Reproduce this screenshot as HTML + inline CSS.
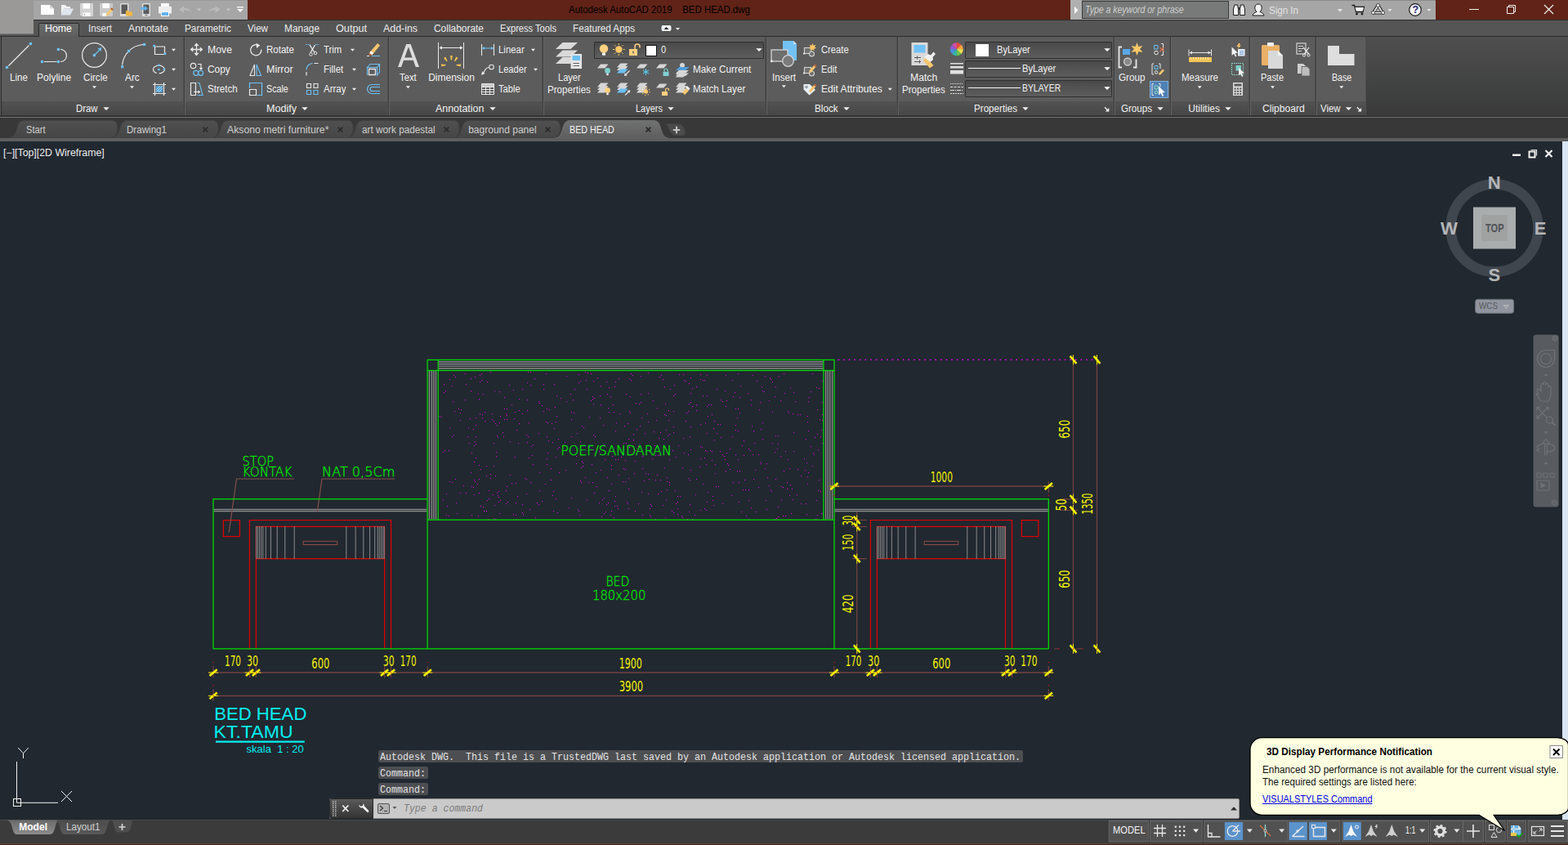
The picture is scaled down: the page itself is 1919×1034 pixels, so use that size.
<!DOCTYPE html>
<html lang="en"><head><meta charset="utf-8"><title>Autodesk AutoCAD 2019 - BED HEAD.dwg</title>
<style>
html,body{margin:0;padding:0;background:#212830;overflow:hidden;}
#app{position:relative;width:1919px;height:1034px;overflow:hidden;background:#212830;font-family:"Liberation Sans",sans-serif;}
.b{position:absolute;box-sizing:border-box;}
.t{position:absolute;white-space:pre;transform-origin:0 50%;}
svg{position:absolute;overflow:visible;}
svg text{white-space:pre;}
</style></head><body><div id="app">
<section id="workspace-background">
<div class="b" style="left:0px;top:45px;width:1919px;height:98px;background:#454545;"></div>
<div class="b" style="left:0px;top:144px;width:1919px;height:25px;background:#383838;"></div>
<div class="b" style="left:0px;top:169px;width:1919px;height:4px;background:#5e5e5e;"></div>
<div class="b" style="left:0px;top:173px;width:1912px;height:830px;background:#212830;"></div>
<div class="b" style="left:1912px;top:173px;width:7px;height:830px;background:#d9e6f2;"></div>
</section>
<section id="title-bar-and-ribbon-tabs">
<div class="b" style="left:0px;top:0px;width:1919px;height:24px;background:#612317;"></div>
<div class="b" style="left:0px;top:24px;width:1919px;height:1px;background:#2e2e2e;"></div>
<div class="b" style="left:0px;top:25px;width:1919px;height:19px;background:#555555;"></div>
<div class="b" style="left:0px;top:44px;width:1919px;height:1px;background:#2b2b2b;"></div>
<div class="b" style="left:0px;top:0px;width:41px;height:41px;background:#9b9997;"></div>
<div class="b" style="left:0px;top:41px;width:41px;height:1px;background:#7a7a7a;"></div>
<div class="b" style="left:41px;top:0px;width:262px;height:24px;background:#a6a6a6;border-top:1px solid #9a9a9a;"></div>
<div class="b" style="left:1310px;top:0px;width:447px;height:24px;background:#a6a6a6;border-top:1px solid #8a8a8a;"></div>
<div class="b" style="left:1310px;top:0px;width:14px;height:24px;background:#b0b0b0;"></div>
<div class="b" style="left:1324px;top:1px;width:180px;height:22px;background:#787a79;border:1px solid #3a3a3a;"></div>
<span class="t " style="left:1327.80px;top:5px;font-size:12px;line-height:14px;color:#cfcfcf;font-family:'Liberation Sans',sans-serif;font-style:italic;transform:scaleX(0.8749);">Type a keyword or phrase</span>
<span class="t " style="left:1553.00px;top:6px;font-size:12px;line-height:14px;color:#e2e2e2;font-family:'Liberation Sans',sans-serif;transform:scaleX(0.9636);">Sign In</span>
<span class="t " style="left:695.60px;top:5px;font-size:12px;line-height:14px;color:#000000;font-family:'Liberation Sans',sans-serif;transform:scaleX(0.9528);">Autodesk AutoCAD 2019    BED HEAD.dwg</span>
<svg width="1919" height="45" viewBox="0 0 1919 45" style="left:0;top:0"><path d="M50 6h11l5 4.5V18H50z" fill="#ffffff"/><path d="M61 6v4.5h5z" fill="#d8d8d8"/><path d="M75 6h5l1.5 2H86v2.5H78.5L75 18z" fill="#f4f4f4"/><path d="M78.5 10.5H90L86 18.5H74.5z" fill="#dfe6ee"/><path d="M98 4h16v16h-14.5L98 18.500z" fill="#d2d2d2"/><rect x="101.5" y="4" width="8.500" height="6.500" fill="#ffffff"/><rect x="101.500" y="15.500" width="9" height="4.500" fill="#ffffff"/><rect x="103" y="16.500" width="1" height="2.500" fill="#b0b0b0"/><path d="M122 4h16v16h-14.5L122 18.500z" fill="#c9c9c9"/><rect x="125.500" y="4" width="8.500" height="6" fill="#ffffff"/><rect x="125.5" y="16" width="5" height="4" fill="#ffffff"/><path d="M130 17l6-7 2.500 2-6 7-3 .8z" fill="#f1c877"/><path d="M135 11l1.500-1.700 2.500 2-1.500 1.800z" fill="#b5663d"/><rect x="147" y="4" width="10.500" height="16" rx="1" fill="#dcdcdc"/><rect x="148.500" y="5.500" width="7.500" height="11.500" fill="#5a5a5a"/><path d="M154 13h3l1 1.200h4V19.500h-8z" fill="#f0b545"/><rect x="174" y="4" width="10" height="16" rx="1" fill="#dcdcdc"/><rect x="175.500" y="5.500" width="7" height="11.500" fill="#5a5a5a"/><path d="M172 9h5V7l4 3.300-4 3.200V11.500h-5z" fill="#5fb4f0"/><rect x="177.500" y="18" width="3" height="1" fill="#666"/><rect x="197" y="4" width="10" height="5" fill="#ffffff"/><rect x="194" y="8" width="16" height="8.500" fill="#eeeeee"/><rect x="197" y="14" width="10" height="6" fill="#ffffff"/><rect x="198" y="15" width="8" height="4" fill="#62b3ee"/><path d="M219 11.500l6-4.300v2.600c4 0 7.500 1.500 9 5-2-2-5-2.600-9-2.400v3.300z" fill="#b9b9b9"/><path d="M241 10.500h5l-2.500 3z" fill="#c4c8cc"/><path d="M269.500 11.500l-6-4.300v2.600c-4 0-7.500 1.500-9 5 2-2 5-2.600 9-2.400v3.300z" fill="#b9b9b9"/><path d="M277 10.500h5l-2.500 3z" fill="#c4c8cc"/><rect x="290" y="8" width="8" height="1.500" fill="#f4f4f4"/><path d="M290 11h8l-4 4z" fill="#f4f4f4"/><path d="M1315 8l4.500 4.500-4.500 4.500z" fill="#ffffff"/><g fill="#f0f0f0" stroke="#1a1a1a" stroke-width="1"><path d="M1509.5 11l1.500-5h3.500l1 5v7.500h-6z"/><path d="M1517.500 11l1-5h3.500l1.500 5v7.500h-6z"/></g><rect x="1510" y="13.500" width="5" height="4.500" fill="#ffffff"/><rect x="1518" y="13.500" width="5" height="4.500" fill="#ffffff"/><rect x="1515" y="9" width="3" height="3" fill="#333"/><path d="M1533 19c.5-3 3-3.500 5-4.500-2-2-2.500-4-2-6.500.5-2 2-3 4-3s3.500 1 4 3c.5 2.500 0 4.500-2 6.500 2 1 4.500 1.500 5 4.500z" fill="#f2f2f2" stroke="#1a1a1a" stroke-width="1"/><path d="M1637 11h6l-3 3.500z" fill="#e8e8e8"/><path d="M1654.5 6.500h3l2 8h8.500l1.500-6h-11" fill="none" stroke="#1a1a1a" stroke-width="1.300"/><circle cx="1660.500" cy="17" r="1.400" fill="#1a1a1a"/><circle cx="1667" cy="17" r="1.400" fill="#1a1a1a"/><path d="M1658.500 9h10.500l-1.200 4.500h-8z" fill="#f2f2f2"/><path d="M1686.500 5.500c1 0 1.500.5 2 1.500l4.500 7.500c1 1.800-.5 2.500-2 2.500h-9c-1.500 0-3-.7-2-2.500l4.500-7.500c.5-1 1-1.500 2-1.500z" fill="#efefef" stroke="#1a1a1a" stroke-width="1.100"/><path d="M1686.500 9l3.500 5.500h-7z" fill="#a6a6a6" stroke="#1a1a1a" stroke-width=".8"/><circle cx="1686.500" cy="6.500" r="2" fill="#f4f4f4" stroke="#1a1a1a" stroke-width=".800"/><circle cx="1680.500" cy="15.500" r="2" fill="#f4f4f4" stroke="#1a1a1a" stroke-width=".800"/><circle cx="1692.500" cy="15.500" r="2" fill="#f4f4f4" stroke="#1a1a1a" stroke-width=".800"/><path d="M1698.500 11h5l-2.500 3z" fill="#e8e8e8"/><circle cx="1732" cy="12" r="7.300" fill="#f4f4f4" stroke="#1a1a1a" stroke-width="1.200"/><path d="M1746.500 11h5l-2.500 3z" fill="#e8e8e8"/><rect x="1798" y="11" width="12" height="1" fill="#f0f0f0"/><path d="M1844.500 8.500h8v8h-8zM1846.500 8.500v-2h8v8h-2" fill="none" stroke="#f0f0f0" stroke-width="1"/><path d="M1890 6l11 11M1901 6l-11 11" fill="none" stroke="#f0f0f0" stroke-width="1.200"/><rect x="809" y="30.500" width="13" height="8" rx="2.500" fill="#eef2f6" stroke="#3a3a3a" stroke-width=".8"/><path d="M812.500 36l3-3 3 3z" fill="#2a2a2a"/><path d="M827 34h5l-2.500 3z" fill="#e8e8e8"/></svg>
<span class="t " style="left:1728.40px;top:5px;font-size:12.5px;line-height:14px;color:#25257a;font-family:'Liberation Sans',sans-serif;font-weight:bold;">?</span>
<div class="b" style="left:46.5px;top:27.5px;width:50.5px;height:17.5px;background:linear-gradient(#6a6c6b,#5e5e5e);border:1px solid #2b2b2b;border-bottom:none;border-radius:2px 2px 0 0;"></div>
<span class="t " style="left:55.00px;top:28px;font-size:12px;line-height:14px;color:#ffffff;font-family:'Liberation Sans',sans-serif;transform:scaleX(1.0307);">Home</span>
<span class="t " style="left:108.00px;top:28px;font-size:12px;line-height:14px;color:#ececec;font-family:'Liberation Sans',sans-serif;transform:scaleX(0.9662);">Insert</span>
<span class="t " style="left:157.00px;top:28px;font-size:12px;line-height:14px;color:#ececec;font-family:'Liberation Sans',sans-serif;transform:scaleX(1.0198);">Annotate</span>
<span class="t " style="left:226.00px;top:28px;font-size:12px;line-height:14px;color:#ececec;font-family:'Liberation Sans',sans-serif;transform:scaleX(0.9825);">Parametric</span>
<span class="t " style="left:303.00px;top:28px;font-size:12px;line-height:14px;color:#ececec;font-family:'Liberation Sans',sans-serif;transform:scaleX(0.9691);">View</span>
<span class="t " style="left:348.00px;top:28px;font-size:12px;line-height:14px;color:#ececec;font-family:'Liberation Sans',sans-serif;transform:scaleX(0.9914);">Manage</span>
<span class="t " style="left:411.00px;top:28px;font-size:12px;line-height:14px;color:#ececec;font-family:'Liberation Sans',sans-serif;transform:scaleX(1.0546);">Output</span>
<span class="t " style="left:469.00px;top:28px;font-size:12px;line-height:14px;color:#ececec;font-family:'Liberation Sans',sans-serif;transform:scaleX(1.0323);">Add-ins</span>
<span class="t " style="left:531.00px;top:28px;font-size:12px;line-height:14px;color:#ececec;font-family:'Liberation Sans',sans-serif;transform:scaleX(0.9939);">Collaborate</span>
<span class="t " style="left:612.00px;top:28px;font-size:12px;line-height:14px;color:#ececec;font-family:'Liberation Sans',sans-serif;transform:scaleX(0.9264);">Express Tools</span>
<span class="t " style="left:701.00px;top:28px;font-size:12px;line-height:14px;color:#ececec;font-family:'Liberation Sans',sans-serif;transform:scaleX(0.9736);">Featured Apps</span>
</section>
<section id="ribbon-panels">
<div class="b" style="left:0px;top:45px;width:1919px;height:98px;background:linear-gradient(#4e4e4e 0px,#484848 30px,#414242 60px,#3a3a3a 97px);"></div>
<div class="b" style="left:0px;top:45px;width:1px;height:98px;background:#5a5a5a;"></div>
<div class="b" style="left:1px;top:45px;width:1px;height:98px;background:#2a2a2a;"></div>
<div class="b" style="left:2px;top:45px;width:1669px;height:79px;background:#5c5c5c;"></div>
<div class="b" style="left:2px;top:124px;width:1669px;height:17px;background:linear-gradient(#525252,#474747);"></div>
<div class="b" style="left:0px;top:141px;width:1671px;height:1px;background:#383838;"></div>
<div class="b" style="left:0px;top:142px;width:1919px;height:1px;background:#2a2a2a;"></div>
<div class="b" style="left:0px;top:143px;width:1919px;height:1px;background:#767676;"></div>
<div class="b" style="left:224.5px;top:45px;width:1px;height:96px;background:#3d3d3d;"></div>
<div class="b" style="left:225.5px;top:45px;width:1px;height:96px;background:#646464;"></div>
<div class="b" style="left:223.5px;top:45px;width:1px;height:96px;background:#505050;"></div>
<div class="b" style="left:474.5px;top:45px;width:1px;height:96px;background:#3d3d3d;"></div>
<div class="b" style="left:475.5px;top:45px;width:1px;height:96px;background:#646464;"></div>
<div class="b" style="left:473.5px;top:45px;width:1px;height:96px;background:#505050;"></div>
<div class="b" style="left:664px;top:45px;width:1px;height:96px;background:#3d3d3d;"></div>
<div class="b" style="left:665px;top:45px;width:1px;height:96px;background:#646464;"></div>
<div class="b" style="left:663px;top:45px;width:1px;height:96px;background:#505050;"></div>
<div class="b" style="left:937px;top:45px;width:1px;height:96px;background:#3d3d3d;"></div>
<div class="b" style="left:938px;top:45px;width:1px;height:96px;background:#646464;"></div>
<div class="b" style="left:936px;top:45px;width:1px;height:96px;background:#505050;"></div>
<div class="b" style="left:1098px;top:45px;width:1px;height:96px;background:#3d3d3d;"></div>
<div class="b" style="left:1099px;top:45px;width:1px;height:96px;background:#646464;"></div>
<div class="b" style="left:1097px;top:45px;width:1px;height:96px;background:#505050;"></div>
<div class="b" style="left:1362.5px;top:45px;width:1px;height:96px;background:#3d3d3d;"></div>
<div class="b" style="left:1363.5px;top:45px;width:1px;height:96px;background:#646464;"></div>
<div class="b" style="left:1361.5px;top:45px;width:1px;height:96px;background:#505050;"></div>
<div class="b" style="left:1432px;top:45px;width:1px;height:96px;background:#3d3d3d;"></div>
<div class="b" style="left:1433px;top:45px;width:1px;height:96px;background:#646464;"></div>
<div class="b" style="left:1431px;top:45px;width:1px;height:96px;background:#505050;"></div>
<div class="b" style="left:1529px;top:45px;width:1px;height:96px;background:#3d3d3d;"></div>
<div class="b" style="left:1530px;top:45px;width:1px;height:96px;background:#646464;"></div>
<div class="b" style="left:1528px;top:45px;width:1px;height:96px;background:#505050;"></div>
<div class="b" style="left:1609.5px;top:45px;width:1px;height:96px;background:#3d3d3d;"></div>
<div class="b" style="left:1610.5px;top:45px;width:1px;height:96px;background:#646464;"></div>
<div class="b" style="left:1608.5px;top:45px;width:1px;height:96px;background:#505050;"></div>
<div class="b" style="left:1670.5px;top:45px;width:1px;height:96px;background:#505050;"></div>
<div class="b" style="left:727px;top:50.5px;width:208px;height:21px;background:linear-gradient(#4a4a4a,#5d5d5d);border:1px solid #2f2f2f;border-radius:1px;"></div>
<div class="b" style="left:1181px;top:50.5px;width:180px;height:21px;background:linear-gradient(#4a4a4a,#5d5d5d);border:1px solid #2f2f2f;border-radius:1px;"></div>
<div class="b" style="left:1181px;top:73.5px;width:180px;height:21px;background:linear-gradient(#4a4a4a,#5d5d5d);border:1px solid #2f2f2f;border-radius:1px;"></div>
<div class="b" style="left:1181px;top:97.5px;width:180px;height:21px;background:linear-gradient(#4a4a4a,#5d5d5d);border:1px solid #2f2f2f;border-radius:1px;"></div>
<div class="b" style="left:790px;top:55px;width:14px;height:14px;background:#ffffff;border:1px solid #111;"></div>
<div class="b" style="left:1193.5px;top:53.5px;width:16px;height:15px;background:#ffffff;"></div>
<div class="b" style="left:1185px;top:83px;width:64px;height:1px;background:#f4f4f4;"></div>
<div class="b" style="left:1185px;top:107px;width:64px;height:1px;background:#f4f4f4;"></div>
<div class="b" style="left:1406.5px;top:99px;width:23px;height:21px;background:#4f7fb3;border:1px solid #7fb0e0;"></div>
<span class="t " style="left:12.40px;top:88px;font-size:12px;line-height:14px;color:#f2f2f2;font-family:'Liberation Sans',sans-serif;transform:scaleX(0.9609);">Line</span>
<span class="t " style="left:45.00px;top:88px;font-size:12px;line-height:14px;color:#f2f2f2;font-family:'Liberation Sans',sans-serif;transform:scaleX(1.0040);">Polyline</span>
<span class="t " style="left:101.50px;top:88px;font-size:12px;line-height:14px;color:#f2f2f2;font-family:'Liberation Sans',sans-serif;transform:scaleX(0.9683);">Circle</span>
<span class="t " style="left:153.00px;top:88px;font-size:12px;line-height:14px;color:#f2f2f2;font-family:'Liberation Sans',sans-serif;transform:scaleX(0.9889);">Arc</span>
<span class="t " style="left:489.40px;top:88px;font-size:12px;line-height:14px;color:#f2f2f2;font-family:'Liberation Sans',sans-serif;transform:scaleX(0.9402);">Text</span>
<span class="t " style="left:524.20px;top:88px;font-size:12px;line-height:14px;color:#f2f2f2;font-family:'Liberation Sans',sans-serif;">Dimension</span>
<span class="t " style="left:683.20px;top:88px;font-size:12px;line-height:14px;color:#f2f2f2;font-family:'Liberation Sans',sans-serif;transform:scaleX(0.9224);">Layer</span>
<span class="t " style="left:670.40px;top:103px;font-size:12px;line-height:14px;color:#f2f2f2;font-family:'Liberation Sans',sans-serif;transform:scaleX(0.9670);">Properties</span>
<span class="t " style="left:945.00px;top:88px;font-size:12px;line-height:14px;color:#f2f2f2;font-family:'Liberation Sans',sans-serif;transform:scaleX(0.9662);">Insert</span>
<span class="t " style="left:1114.30px;top:88px;font-size:12px;line-height:14px;color:#f2f2f2;font-family:'Liberation Sans',sans-serif;transform:scaleX(1.0157);">Match</span>
<span class="t " style="left:1104.30px;top:103px;font-size:12px;line-height:14px;color:#f2f2f2;font-family:'Liberation Sans',sans-serif;transform:scaleX(0.9634);">Properties</span>
<span class="t " style="left:1369.30px;top:88px;font-size:12px;line-height:14px;color:#f2f2f2;font-family:'Liberation Sans',sans-serif;transform:scaleX(0.9742);">Group</span>
<span class="t " style="left:1446.30px;top:88px;font-size:12px;line-height:14px;color:#f2f2f2;font-family:'Liberation Sans',sans-serif;transform:scaleX(0.9617);">Measure</span>
<span class="t " style="left:1543.30px;top:88px;font-size:12px;line-height:14px;color:#f2f2f2;font-family:'Liberation Sans',sans-serif;transform:scaleX(0.9124);">Paste</span>
<span class="t " style="left:1629.50px;top:88px;font-size:12px;line-height:14px;color:#f2f2f2;font-family:'Liberation Sans',sans-serif;transform:scaleX(0.8882);">Base</span>
<span class="t " style="left:254.20px;top:54px;font-size:12px;line-height:14px;color:#f2f2f2;font-family:'Liberation Sans',sans-serif;transform:scaleX(1.0224);">Move</span>
<span class="t " style="left:254.20px;top:78px;font-size:12px;line-height:14px;color:#f2f2f2;font-family:'Liberation Sans',sans-serif;transform:scaleX(0.9923);">Copy</span>
<span class="t " style="left:254.20px;top:102px;font-size:12px;line-height:14px;color:#f2f2f2;font-family:'Liberation Sans',sans-serif;transform:scaleX(0.9654);">Stretch</span>
<span class="t " style="left:326.40px;top:54px;font-size:12px;line-height:14px;color:#f2f2f2;font-family:'Liberation Sans',sans-serif;transform:scaleX(0.9616);">Rotate</span>
<span class="t " style="left:326.40px;top:78px;font-size:12px;line-height:14px;color:#f2f2f2;font-family:'Liberation Sans',sans-serif;transform:scaleX(1.0406);">Mirror</span>
<span class="t " style="left:326.40px;top:102px;font-size:12px;line-height:14px;color:#f2f2f2;font-family:'Liberation Sans',sans-serif;transform:scaleX(0.8924);">Scale</span>
<span class="t " style="left:395.60px;top:54px;font-size:12px;line-height:14px;color:#f2f2f2;font-family:'Liberation Sans',sans-serif;transform:scaleX(0.9428);">Trim</span>
<span class="t " style="left:395.60px;top:78px;font-size:12px;line-height:14px;color:#f2f2f2;font-family:'Liberation Sans',sans-serif;transform:scaleX(0.9549);">Fillet</span>
<span class="t " style="left:395.60px;top:102px;font-size:12px;line-height:14px;color:#f2f2f2;font-family:'Liberation Sans',sans-serif;transform:scaleX(0.9556);">Array</span>
<span class="t " style="left:610.40px;top:54px;font-size:12px;line-height:14px;color:#f2f2f2;font-family:'Liberation Sans',sans-serif;transform:scaleX(0.9503);">Linear</span>
<span class="t " style="left:610.40px;top:78px;font-size:12px;line-height:14px;color:#f2f2f2;font-family:'Liberation Sans',sans-serif;transform:scaleX(0.9258);">Leader</span>
<span class="t " style="left:610.40px;top:102px;font-size:12px;line-height:14px;color:#f2f2f2;font-family:'Liberation Sans',sans-serif;transform:scaleX(0.9342);">Table</span>
<span class="t " style="left:808.90px;top:54px;font-size:12px;line-height:14px;color:#f2f2f2;font-family:'Liberation Sans',sans-serif;transform:scaleX(0.9271);">0</span>
<span class="t " style="left:848.20px;top:78px;font-size:12px;line-height:14px;color:#f2f2f2;font-family:'Liberation Sans',sans-serif;transform:scaleX(0.9807);">Make Current</span>
<span class="t " style="left:848.20px;top:102px;font-size:12px;line-height:14px;color:#f2f2f2;font-family:'Liberation Sans',sans-serif;transform:scaleX(0.9738);">Match Layer</span>
<span class="t " style="left:1004.50px;top:54px;font-size:12px;line-height:14px;color:#f2f2f2;font-family:'Liberation Sans',sans-serif;transform:scaleX(0.9353);">Create</span>
<span class="t " style="left:1004.50px;top:78px;font-size:12px;line-height:14px;color:#f2f2f2;font-family:'Liberation Sans',sans-serif;transform:scaleX(0.9329);">Edit</span>
<span class="t " style="left:1004.50px;top:102px;font-size:12px;line-height:14px;color:#f2f2f2;font-family:'Liberation Sans',sans-serif;transform:scaleX(1.0088);">Edit Attributes</span>
<span class="t " style="left:1220.00px;top:54px;font-size:12px;line-height:14px;color:#f2f2f2;font-family:'Liberation Sans',sans-serif;transform:scaleX(0.9266);">ByLayer</span>
<span class="t " style="left:1250.80px;top:77px;font-size:12px;line-height:14px;color:#f2f2f2;font-family:'Liberation Sans',sans-serif;transform:scaleX(0.9357);">ByLayer</span>
<span class="t " style="left:1250.80px;top:101px;font-size:12px;line-height:14px;color:#f2f2f2;font-family:'Liberation Sans',sans-serif;transform:scaleX(0.8666);">BYLAYER</span>
<span class="t " style="left:93.40px;top:126px;font-size:12px;line-height:14px;color:#f2f2f2;font-family:'Liberation Sans',sans-serif;transform:scaleX(0.9459);">Draw</span>
<span class="t " style="left:325.50px;top:126px;font-size:12px;line-height:14px;color:#f2f2f2;font-family:'Liberation Sans',sans-serif;transform:scaleX(1.0497);">Modify</span>
<span class="t " style="left:533.40px;top:126px;font-size:12px;line-height:14px;color:#f2f2f2;font-family:'Liberation Sans',sans-serif;transform:scaleX(1.0350);">Annotation</span>
<span class="t " style="left:778.20px;top:126px;font-size:12px;line-height:14px;color:#f2f2f2;font-family:'Liberation Sans',sans-serif;transform:scaleX(0.9159);">Layers</span>
<span class="t " style="left:997.30px;top:126px;font-size:12px;line-height:14px;color:#f2f2f2;font-family:'Liberation Sans',sans-serif;transform:scaleX(0.9781);">Block</span>
<span class="t " style="left:1192.00px;top:126px;font-size:12px;line-height:14px;color:#f2f2f2;font-family:'Liberation Sans',sans-serif;transform:scaleX(0.9689);">Properties</span>
<span class="t " style="left:1372.00px;top:126px;font-size:12px;line-height:14px;color:#f2f2f2;font-family:'Liberation Sans',sans-serif;transform:scaleX(0.9655);">Groups</span>
<span class="t " style="left:1454.30px;top:126px;font-size:12px;line-height:14px;color:#f2f2f2;font-family:'Liberation Sans',sans-serif;">Utilities</span>
<span class="t " style="left:1544.50px;top:126px;font-size:12px;line-height:14px;color:#f2f2f2;font-family:'Liberation Sans',sans-serif;transform:scaleX(1.0083);">Clipboard</span>
<span class="t " style="left:1615.50px;top:126px;font-size:12px;line-height:14px;color:#f2f2f2;font-family:'Liberation Sans',sans-serif;transform:scaleX(0.9497);">View</span>
<svg width="1919" height="145" viewBox="0 0 1919 145" style="left:0;top:0"><path d="M126.3 131.2h7.4l-3.7 3.8z" fill="#f0f0f0"/><path d="M369.3 131.2h7.4l-3.7 3.8z" fill="#f0f0f0"/><path d="M599.3 131.2h7.4l-3.7 3.8z" fill="#f0f0f0"/><path d="M817.3 131.2h7.4l-3.7 3.8z" fill="#f0f0f0"/><path d="M1032.3 131.2h7.4l-3.7 3.8z" fill="#f0f0f0"/><path d="M1251.3 131.2h7.4l-3.7 3.8z" fill="#f0f0f0"/><path d="M1416.3 131.2h7.4l-3.7 3.8z" fill="#f0f0f0"/><path d="M1499.3 131.2h7.4l-3.7 3.8z" fill="#f0f0f0"/><path d="M1646.8 131.2h7.4l-3.7 3.8z" fill="#f0f0f0"/><path d="M113.0 105.2h5.0l-2.5 3.0z" fill="#f0f0f0"/><path d="M159.0 105.2h5.0l-2.5 3.0z" fill="#f0f0f0"/><path d="M496.9 105.2h5.0l-2.5 3.0z" fill="#f0f0f0"/><path d="M956.9 104.2h5.0l-2.5 3.0z" fill="#f0f0f0"/><path d="M1465.7 105.2h5.0l-2.5 3.0z" fill="#f0f0f0"/><path d="M1555.0 105.2h5.0l-2.5 3.0z" fill="#f0f0f0"/><path d="M1639.3 105.2h5.0l-2.5 3.0z" fill="#f0f0f0"/><path d="M210.0 59.8h5.0l-2.5 3.0z" fill="#f0f0f0"/><path d="M210.0 83.8h5.0l-2.5 3.0z" fill="#f0f0f0"/><path d="M210.0 107.8h5.0l-2.5 3.0z" fill="#f0f0f0"/><path d="M429.0 59.8h5.0l-2.5 3.0z" fill="#f0f0f0"/><path d="M431.0 83.8h5.0l-2.5 3.0z" fill="#f0f0f0"/><path d="M431.0 107.8h5.0l-2.5 3.0z" fill="#f0f0f0"/><path d="M650.0 59.8h5.0l-2.5 3.0z" fill="#f0f0f0"/><path d="M653.0 83.8h5.0l-2.5 3.0z" fill="#f0f0f0"/><path d="M1086.8 107.8h5.0l-2.5 3.0z" fill="#f0f0f0"/><path d="M925.3 59.2h7.4l-3.7 3.8z" fill="#ffffff"/><path d="M1351.3 59.2h7.4l-3.7 3.8z" fill="#ffffff"/><path d="M1351.3 82.2h7.4l-3.7 3.8z" fill="#ffffff"/><path d="M1351.3 106.2h7.4l-3.7 3.8z" fill="#ffffff"/><path d="M1352.0 131.300l4.500 4.500" fill="none" stroke="#f4f4f4" stroke-width="1.300"/><path d="M1357.3 132v4.500h-4.500z" fill="#f4f4f4"/><path d="M1660.8 131.300l4.500 4.500" fill="none" stroke="#f4f4f4" stroke-width="1.300"/><path d="M1666.1 132v4.500h-4.500z" fill="#f4f4f4"/><path d="M10.5 80.500L35.500 55.500" fill="none" stroke="#e9e9e9" stroke-width="1.2" /><rect x="6.9" y="80.8" width="3.2" height="3.2" fill="#6cc0f4"/><rect x="35.9" y="51.9" width="3.2" height="3.2" fill="#6cc0f4"/><path d="M54 75.500h15.500M74 60.500a7.500 7.500 0 0 1 0 15" fill="none" stroke="#e9e9e9" stroke-width="1.2" /><rect x="49.9" y="73.9" width="3.2" height="3.2" fill="#6cc0f4"/><rect x="69.8" y="73.9" width="3.2" height="3.2" fill="#6cc0f4"/><rect x="69.8" y="58.9" width="3.2" height="3.2" fill="#6cc0f4"/><circle cx="115.5" cy="67.5" r="14.9" fill="none" stroke="#e9e9e9" stroke-width="1.2"/><path d="M116 67l5.500-5.500" fill="none" stroke="#6cc0f4" stroke-width="1.2" /><path d="M124.500 58l-1.200 5-3.800-3.800z" fill="#6cc0f4"/><rect x="113.8" y="65.9" width="3.2" height="3.2" fill="#6cc0f4"/><path d="M149.600 79.500C151 67 160 56 175 54.500" fill="none" stroke="#e9e9e9" stroke-width="1.2" /><rect x="148.1" y="80.1" width="3.2" height="3.2" fill="#6cc0f4"/><rect x="156.0" y="60.9" width="3.2" height="3.2" fill="#6cc0f4"/><rect x="175.0" y="52.8" width="3.2" height="3.2" fill="#6cc0f4"/><path d="M189.500 57h12v9.500h-12z" fill="none" stroke="#e9e9e9" stroke-width="1.2" /><rect x="187.3" y="54.8" width="2.6" height="2.6" fill="#6cc0f4"/><rect x="200.7" y="64.5" width="2.6" height="2.6" fill="#6cc0f4"/><ellipse cx="194.500" cy="85" rx="7" ry="4.800" fill="none" stroke="#e9e9e9" stroke-width="1.200" stroke-dasharray="9 3 20 0"/><rect x="193.2" y="78.6" width="2.4" height="2.4" fill="#6cc0f4"/><rect x="193.2" y="83.8" width="2.4" height="2.4" fill="#6cc0f4"/><rect x="199.8" y="83.8" width="2.4" height="2.4" fill="#6cc0f4"/><path d="M187 103.500h16M187 114.500h16M189.500 101v16M200.500 101v16" fill="none" stroke="#e9e9e9" stroke-width="1.2" /><rect x="191" y="105" width="8" height="8" fill="#4f9fd8" /><path d="M191 110l5-5M191 113l8-8M194 113l5-5" fill="none" stroke="#bfe3fb" stroke-width="0.9" /><path d="M233.500 60.500h14M240.500 53.500v14" fill="none" stroke="#e9e9e9" stroke-width="1.3" /><path d="M240.500 52.600l3.200 3.700h-6.400zM240.500 68.400l3.200-3.700h-6.400zM232.600 60.500l3.700-3.200v6.400zM248.400 60.500l-3.700-3.200v6.400z" fill="#e9e9e9"/><circle cx="236.5" cy="80.5" r="3.2" fill="none" stroke="#e9e9e9" stroke-width="1.2"/><path d="M242 78.500h4v5" fill="none" stroke="#e9e9e9" stroke-width="1.2" /><path d="M243.800 83h4.400l-2.200 3z" fill="#e9e9e9"/><circle cx="239.8" cy="89.3" r="3" fill="none" stroke="#6cc0f4" stroke-width="1.2"/><circle cx="245.6" cy="89.3" r="3" fill="none" stroke="#6cc0f4" stroke-width="1.2"/><path d="M233.500 101.500h6v15h-6z" fill="none" stroke="#e9e9e9" stroke-width="1.2" /><path d="M241.500 101.500h2.500l4 15h-6.500" fill="none" stroke="#6cc0f4" stroke-width="1.1" /><path d="M237 112.500h6" fill="none" stroke="#e9e9e9" stroke-width="1.1" /><path d="M242.500 110.300l2.800 2.200-2.800 2.200z" fill="#e9e9e9"/><path d="M316.500 55.500a6.600 6.600 0 1 0 3.300 5" fill="none" stroke="#e9e9e9" stroke-width="1.3" /><path d="M313.500 52.800l4.800 2.800-4.200 3.400z" fill="#e9e9e9"/><path d="M311.500 79v13.500h-5.500z" fill="none" stroke="#e9e9e9" stroke-width="1.1" /><path d="M314 79v13.500h5.500z" fill="none" stroke="#6cc0f4" stroke-width="1.1" /><path d="M305.500 108v-6.500h15v15h-6" fill="none" stroke="#6cc0f4" stroke-width="1.2" /><path d="M305.500 109.500h8v7h-8z" fill="none" stroke="#e9e9e9" stroke-width="1.2" /><path d="M374 54.500h6M386 54.500h4" fill="none" stroke="#6cc0f4" stroke-width="1" stroke-dasharray="1.500 1"/><path d="M379 55l6 9.500M385.500 55l-5.500 9.500" fill="none" stroke="#e9e9e9" stroke-width="1.4" /><circle cx="380.5" cy="66.5" r="1.8" fill="none" stroke="#e9e9e9" stroke-width="1"/><circle cx="386" cy="65" r="1.8" fill="none" stroke="#e9e9e9" stroke-width="1"/><path d="M375 85.500a8 8 0 0 1 7.500-8" fill="none" stroke="#6cc0f4" stroke-width="1.2" /><path d="M384.500 77.500h5M375 88v4.500" fill="none" stroke="#e9e9e9" stroke-width="1.2" /><path d="M375.500 102.500h5v5h-5zM384 102.500h5v5h-5z" fill="none" stroke="#e9e9e9" stroke-width="1.1" /><path d="M375.500 110.500h5v5h-5zM384 110.500h5v5h-5z" fill="none" stroke="#6cc0f4" stroke-width="1.1" /><path d="M453 63.500l9-10.500 3 2.500-8.500 10.500z" fill="#f6c56e"/><path d="M452 64.700l1.800-2.200 3.200 2.700-1.800 2.200z" fill="#ffffff"/><path d="M450.500 66.500l1.500-1.800 3 2.600-1.200 1.200z" fill="#b5663d"/><path d="M449 68.500h3" fill="none" stroke="#e9e9e9" stroke-width="1" /><path d="M455 68.500h10" fill="none" stroke="#6cc0f4" stroke-width="1" /><path d="M449.500 82.500l3.500-4h11.500l-3 4zM464.500 78.500v9.500l-3 4v-9.500" fill="none" stroke="#6cc0f4" stroke-width="1.1" /><path d="M451.500 84.500h8v7h-8z" fill="none" stroke="#e9e9e9" stroke-width="1.3" /><path d="M449.500 82.500v9.500" fill="none" stroke="#6cc0f4" stroke-width="1.1" /><path d="M465 103.500h-10a5.500 5.500 0 0 0 0 11h10" fill="none" stroke="#6cc0f4" stroke-width="1.2" /><path d="M465 106.500h-9.500a2.500 2.500 0 0 0 0 5h9.500" fill="none" stroke="#6cc0f4" stroke-width="1.2" /><path d="M487 82l10.200-28h5.400l10.400 28h-4.300l-2.900-8.200h-11.800l-2.900 8.200zM495.200 70.500h9.400l-4.700-13.200z" fill="#dcdcdc"/><path d="M536.500 52v32M567.500 52v32" fill="none" stroke="#e9e9e9" stroke-width="1" /><path d="M538 58.500h28" fill="none" stroke="#e9e9e9" stroke-width="1" /><path d="M537.500 58.500l3.500-2.200v4.400zM566.500 58.500l-3.500-2.200v4.400z" fill="#e9e9e9"/><path d="M551 68l.8 5.500h1.200l.8-5.500zM543 71l3.600 4.200 1-.8-2.400-4.800zM560.500 71l-3.600 4.200-1-.8 2.400-4.800zM540 78.500l5.500.500v1.300l-5.500 1zM564 78.500l-5.500.500v1.300l5.500 1z" fill="#f5c04f"/><path d="M589.500 54v14M604.500 54v14" fill="none" stroke="#e9e9e9" stroke-width="1.1" /><path d="M590.500 59h13" fill="none" stroke="#6cc0f4" stroke-width="1.1" /><path d="M590 59l3-2v4zM604 59l-3-2v4z" fill="#6cc0f4"/><circle cx="601.5" cy="82" r="2.8" fill="none" stroke="#e9e9e9" stroke-width="1.1"/><path d="M598.700 82.500c-4 0-5 3-7.500 7.500" fill="none" stroke="#e9e9e9" stroke-width="1.1" /><path d="M589 92l1.200-4.800 3.300 2.700z" fill="#e9e9e9"/><path d="M589.500 102.500h15v13h-15zM589.500 106.500h15M589.500 109.500h15M589.500 112.500h15M594.500 106.500v9M599.500 106.500v9" fill="none" stroke="#e9e9e9" stroke-width="1" /><rect x="590" y="103" width="14" height="3" fill="#c8c8c8" /><path d="M680 60.0l8.500-8h18.500l-8.500 8z" fill="#d9d9d9"/><path d="M680 69.5l8.500-8h18.500l-8.500 8z" fill="#d9d9d9"/><path d="M680 78.0l8.500-8h18.500l-8.500 8z" fill="#d9d9d9"/><rect x="698.5" y="66" width="13.5" height="18" fill="#e6e6e6" /><rect x="700.5" y="68" width="9.5" height="6" fill="#6cc0f4" /><path d="M701.500 77.500h7.500M701.500 80.500h7.500" fill="none" stroke="#555" stroke-width="0.9" /><circle cx="739" cy="59.500" r="5.200" fill="#ffd080"/><rect x="737" y="64.5" width="4" height="3.2" fill="#f4f4f4" /><circle cx="757.300" cy="60.500" r="4.200" fill="#ffc766"/><path d="M757.300 53v2M757.300 66v2M750 60.500h2M762.600 60.500h2M752 55.200l1.500 1.500M761.100 64.300l1.500 1.500M752 65.800l1.500-1.500M761.100 56.700l1.500-1.500" fill="none" stroke="#ffc766" stroke-width="1" /><rect x="770" y="60" width="10" height="8" fill="#ffd080" /><path d="M777 60v-3a3 3 0 0 1 6 0v1.500" fill="none" stroke="#ffd080" stroke-width="1.5" /><rect x="774.3" y="62.5" width="1.4" height="3" fill="#5c5c5c" /><path d="M731.0 83.5l4.200-5h9.300l-4.200 5z" fill="#d6d6d6"/><circle cx="743.500" cy="86.500" r="3.400" fill="#7fd0d0"/><rect x="742.3" y="89.8" width="2.4" height="2.4" fill="#f0f0f0" /><path d="M755.0 82.5l4.200-5h9.300l-4.200 5z" fill="#d6d6d6"/><path d="M755.0 86.0l4.200-5h9.300l-4.200 5z" fill="#d6d6d6"/><path d="M755.0 89.5l4.200-5h9.300l-4.200 5z" fill="#6cc0f4"/><path d="M770.500 86.500l-5.500 5.500" fill="none" stroke="#e9e9e9" stroke-width="1.1" /><path d="M764 93l.8-3.800 3 3z" fill="#e9e9e9"/><path d="M779.0 83.5l4.200-5h9.300l-4.200 5z" fill="#d6d6d6"/><path d="M790.500 84v8M787 86l7 4M787 90l7-4" fill="none" stroke="#5fc8e8" stroke-width="1.1" /><path d="M803.0 83.5l4.200-5h9.300l-4.200 5z" fill="#d6d6d6"/><rect x="811.5" y="88" width="7" height="5" fill="#7fd0d0" /><path d="M813 88v-2a2 2 0 0 1 4 0v2" fill="none" stroke="#7fd0d0" stroke-width="1.2" /><circle cx="835" cy="80" r="3" fill="#d6d6d6"/><path d="M827 86l4.500-4h12l-4.500 4z" fill="#4f9fe0"/><path d="M827.0 91.0l4.200-5h9.300l-4.200 5z" fill="#d6d6d6"/><path d="M827.0 94.5l4.200-5h9.300l-4.200 5z" fill="#d6d6d6"/><path d="M827 89.500l4-3.500h12l-4 3.500z" fill="#d6d6d6"/><path d="M827 93l4-3.500h12l-4 3.500z" fill="#d6d6d6"/><path d="M731.0 106.5l4.200-5h9.300l-4.200 5z" fill="#d6d6d6"/><path d="M731.0 110.0l4.200-5h9.300l-4.200 5z" fill="#d6d6d6"/><path d="M731.0 113.5l4.200-5h9.300l-4.200 5z" fill="#d6d6d6"/><circle cx="743.500" cy="110.500" r="3.400" fill="#ffd080"/><rect x="742.3" y="113.8" width="2.4" height="2.4" fill="#f0f0f0" /><path d="M755.0 106.5l4.200-5h9.300l-4.200 5z" fill="#d6d6d6"/><path d="M755.0 110.0l4.200-5h9.300l-4.200 5z" fill="#d6d6d6"/><path d="M755.0 113.5l4.200-5h9.300l-4.200 5z" fill="#6cc0f4"/><path d="M765 116.500l5.500-5.500" fill="none" stroke="#e9e9e9" stroke-width="1.1" /><path d="M771.300 110.200l-.8 3.800-3-3z" fill="#e9e9e9"/><path d="M779.0 106.5l4.200-5h9.300l-4.200 5z" fill="#d6d6d6"/><path d="M779.0 110.0l4.200-5h9.300l-4.200 5z" fill="#d6d6d6"/><path d="M779.0 113.5l4.200-5h9.300l-4.200 5z" fill="#d6d6d6"/><circle cx="790.500" cy="112" r="2.600" fill="#ffc766"/><circle cx="790.5" cy="112" r="4.6" fill="none" stroke="#ffc766" stroke-width="1.2" stroke-dasharray="1.200 2.400"/><path d="M803.0 107.5l4.200-5h9.300l-4.200 5z" fill="#d6d6d6"/><rect x="810" y="112" width="7" height="5" fill="#ffd080" /><path d="M814.500 112v-2a2 2 0 0 1 4 0v1" fill="none" stroke="#ffd080" stroke-width="1.2" /><path d="M827.0 106.5l4.200-5h9.300l-4.200 5z" fill="#d6d6d6"/><path d="M827.0 110.0l4.200-5h9.300l-4.200 5z" fill="#d6d6d6"/><path d="M827.0 113.5l4.200-5h9.300l-4.200 5z" fill="#d6d6d6"/><path d="M835 113l5-5 3 3-5 5z" fill="#f6c56e"/><path d="M839 107l2-2 3.500 3.500-2 2z" fill="#f4f4f4"/><path d="M958 50h13l4 4v20h-17z" fill="#72c2f5"/><path d="M971 50v4h4z" fill="#cfe8fa"/><rect x="944" y="61" width="20" height="14" fill="#6e6e6e" stroke="#d4d4d4" stroke-width="1.300"/><circle cx="964.5" cy="74.5" r="6.8" fill="#7a7a7a" stroke="#d4d4d4" stroke-width="1.3"/><rect x="943" y="73.5" width="2.6" height="2.6" fill="#e4e4e4" /><rect x="984.5" y="58.5" width="8" height="7" fill="#707070" stroke="#d4d4d4" stroke-width="1.100"/><circle cx="993.5" cy="66" r="3" fill="#707070" stroke="#d4d4d4" stroke-width="1.1"/><rect x="983" y="64.5" width="2" height="2" fill="#e4e4e4" /><path d="M994.500 53l1.100 2.700 2.800-.9-1.500 2.500 2.300 1.800-2.900.4.100 2.900-2-2.200-2 2.200.1-2.900-2.900-.4 2.300-1.800-1.500-2.500 2.800.9z" fill="#ffc766"/><rect x="984.5" y="82.5" width="8" height="7" fill="#707070" stroke="#d4d4d4" stroke-width="1.100"/><circle cx="993.5" cy="90" r="3" fill="#707070" stroke="#d4d4d4" stroke-width="1.1"/><rect x="983" y="88.5" width="2" height="2" fill="#e4e4e4" /><path d="M990.500 86.500l5.500-6.500 2.300 1.900-5.500 6.500-2.700.6z" fill="#f6c56e"/><path d="M996 80l1.400-1.600 2.300 1.900-1.400 1.600z" fill="#b5663d"/><path d="M983.500 103h7.500l7 7-7.500 6.500-7-7z" fill="#e8eef4"/><circle cx="987" cy="106.5" r="1.2" fill="none" stroke="#555" stroke-width="0.8"/><path d="M990.500 110.500l5.500-6.500 2.300 1.900-5.500 6.500-2.700.6z" fill="#f6c56e"/><path d="M996 104l1.400-1.600 2.300 1.900-1.400 1.600z" fill="#b5663d"/><rect x="1115.5" y="52" width="20" height="28" fill="#dadada" /><rect x="1118.5" y="55" width="14" height="9.5" fill="#72c2f5" /><path d="M1119 70.500h8M1119 75.500h8M1122.500 68.500v4M1125.500 73.500v4" fill="none" stroke="#555" stroke-width="1" /><path d="M1129.500 73.500l4-3.500 9 10-4.500 3.500z" fill="#f6c56e"/><path d="M1131 70l4.500-4 3.500 1.500 3.500-4 2.500 2.500-3.500 4 .5 3-3.500 3z" fill="#f0f0f0"/><path d="M1170.80 60.30L1170.80 52.30A8 8 0 0 1 1176.46 54.64z" fill="#e94b3c"/><path d="M1170.80 60.30L1176.46 54.64A8 8 0 0 1 1178.80 60.30z" fill="#f2a33a"/><path d="M1170.80 60.30L1178.80 60.30A8 8 0 0 1 1176.46 65.96z" fill="#f4e04d"/><path d="M1170.80 60.30L1176.46 65.96A8 8 0 0 1 1170.80 68.30z" fill="#6cc24a"/><path d="M1170.80 60.30L1170.80 68.30A8 8 0 0 1 1165.14 65.96z" fill="#35b8a6"/><path d="M1170.80 60.30L1165.14 65.96A8 8 0 0 1 1162.80 60.30z" fill="#4a90e2"/><path d="M1170.80 60.30L1162.80 60.30A8 8 0 0 1 1165.14 54.64z" fill="#8e5bd6"/><path d="M1170.80 60.30L1165.14 54.64A8 8 0 0 1 1170.80 52.30z" fill="#d64fa0"/><rect x="1163" y="77" width="16" height="1.5" fill="#e0e0e0" /><rect x="1163" y="81" width="16" height="2.5" fill="#e0e0e0" /><rect x="1163" y="86" width="16" height="4.5" fill="#e0e0e0" /><path d="M1163 102.500h16" fill="none" stroke="#e0e0e0" stroke-width="1" stroke-dasharray="1 1"/><path d="M1163 106.500h16" fill="none" stroke="#e0e0e0" stroke-width="1" stroke-dasharray="3 1.500"/><path d="M1163 110.500h16" fill="none" stroke="#e0e0e0" stroke-width="1" stroke-dasharray="5 1 1 1"/><path d="M1163 114.500h16" fill="none" stroke="#e0e0e0" stroke-width="1" stroke-dasharray="2 1"/><path d="M1373 57.500h-3.500v25h3.500M1387 82.500h3.500v-10" fill="none" stroke="#e9e9e9" stroke-width="1.8" /><rect x="1374" y="60" width="9" height="7" fill="#5aa8e6" /><circle cx="1380" cy="75.5" r="4.5" fill="#8a8a8a" stroke="#c8c8c8" stroke-width="1.4"/><path d="M1391.500 52l1.800 5 5.200-1-3.400 4 3.400 4-5.200-1-1.800 5-1.800-5-5.200 1 3.400-4-3.400-4 5.200 1z" fill="#ffc766"/><path d="M1412.500 55.500h4.500v4.500h-4.500z" fill="none" stroke="#6cc0f4" stroke-width="1" /><circle cx="1415" cy="64.5" r="2.3" fill="none" stroke="#e9e9e9" stroke-width="1"/><path d="M1421 53.500h2.500v14h-2.500" fill="none" stroke="#e9e9e9" stroke-width="1" /><path d="M1419.500 58l5 5M1424.500 58l-5 5" fill="none" stroke="#e0704a" stroke-width="1.3" /><path d="M1412 78h-2v13h2M1418 78h2v6" fill="none" stroke="#e9e9e9" stroke-width="1" /><path d="M1413 80.500h4v4h-4z" fill="none" stroke="#6cc0f4" stroke-width="1" /><circle cx="1415" cy="88.5" r="1.8" fill="none" stroke="#e9e9e9" stroke-width="1"/><path d="M1418.500 89.500l4.500-5 2 1.700-4.500 5-2.300.5z" fill="#f6c56e"/><path d="M1412 102.500h-2v14h2M1418 102.500h2v4" fill="none" stroke="#e9e9e9" stroke-width="1" /><path d="M1413 105h4v4h-4z" fill="none" stroke="#8fe0c0" stroke-width="1" /><circle cx="1415" cy="113" r="1.8" fill="none" stroke="#8fe0c0" stroke-width="1"/><path d="M1418 105.500v11l2.700-2.400 1.800 4 1.700-.8-1.800-3.900 3.400-.3z" fill="#ffffff"/><path d="M1455 60.500v8M1482.500 60.500v8M1456 64.500h26" fill="none" stroke="#e4e4e4" stroke-width="1" /><path d="M1455.500 64.500l3.500-2v4zM1482 64.500l-3.500-2v4z" fill="#e4e4e4"/><rect x="1455" y="70" width="28" height="6" fill="#f3c356" /><path d="M1457.500 70v2.500M1460.500 70v2.500M1463.500 70v2.500M1466.500 70v2.500M1469.500 70v2.500M1472.500 70v2.500M1475.500 70v2.500M1478.500 70v2.500" fill="none" stroke="#fbe7b0" stroke-width="1" /><path d="M1507.500 57.500v10.500l2.600-2.300 1.800 3.800 1.600-.8-1.800-3.700 3.300-.3z" fill="#f4f4f4"/><rect x="1515" y="60" width="8.5" height="8.5" fill="#e8eef4" /><path d="M1517 62.500h5M1517 64.500h5M1517 66.500h5" fill="none" stroke="#4f8fd0" stroke-width="0.8" /><path d="M1516 53l-2.500 4h2.500l-1.500 3 4.500-4.500h-2.500l1.500-2.500z" fill="#ffc766"/><rect x="1507.5" y="77.5" width="14" height="14" fill="none" stroke="#8fe0d0" stroke-width="1" stroke-dasharray="1.500 1"/><path d="M1510 80h9v9h-9z" fill="#7fd0c8"/><path d="M1512.500 80v6.500h6.500v2.500h-9v-9z" fill="#5c5c5c"/><path d="M1516 83v9.500l2.300-2 1.600 3.400 1.500-.7-1.600-3.300 3-.3z" fill="#f4f4f4"/><rect x="1509" y="101" width="12" height="16" fill="#dcdcdc" /><rect x="1510.5" y="102.5" width="9" height="3" fill="#5c5c5c" /><rect x="1510.5" y="107.5" width="2.2" height="2" fill="#5c5c5c" /><rect x="1513.8" y="107.5" width="2.2" height="2" fill="#5c5c5c" /><rect x="1517.1" y="107.5" width="2.2" height="2" fill="#5c5c5c" /><rect x="1510.5" y="110.7" width="2.2" height="2" fill="#5c5c5c" /><rect x="1513.8" y="110.7" width="2.2" height="2" fill="#5c5c5c" /><rect x="1517.1" y="110.7" width="2.2" height="2" fill="#5c5c5c" /><rect x="1510.5" y="113.9" width="2.2" height="2" fill="#5c5c5c" /><rect x="1513.8" y="113.9" width="2.2" height="2" fill="#5c5c5c" /><rect x="1517.1" y="113.9" width="2.2" height="2" fill="#5c5c5c" /><rect x="1544" y="55" width="22" height="25" fill="#e9b066" rx="1.500"/><rect x="1551" y="52" width="8" height="4.5" fill="#f0f0f0" rx="1"/><path d="M1552 62h12l6 6v16h-18z" fill="#d9d9d9"/><path d="M1564 62v6h6z" fill="#f4f4f4"/><rect x="1587" y="53" width="11" height="13" fill="none" stroke="#d4d4d4" stroke-width="1.200"/><path d="M1589 56.500h6M1589 59.500h6M1589 62.500h4" fill="none" stroke="#d4d4d4" stroke-width="1" /><path d="M1595 58l7 8.500M1602 58l-6 8.500" fill="none" stroke="#e8e8e8" stroke-width="1.2" /><circle cx="1596" cy="67.5" r="1.6" fill="none" stroke="#e9e9e9" stroke-width="1"/><circle cx="1601.5" cy="67.5" r="1.6" fill="none" stroke="#e9e9e9" stroke-width="1"/><path d="M1588 78h7l3 3v9h-10z" fill="#cfcfcf"/><path d="M1593 81.500h7l3 3v8.500h-10z" fill="#bdbdbd"/><path d="M1593 81.500h7l3 3v8.500h-10z" fill="none" stroke="#5c5c5c" stroke-width="0.8" /><path d="M1625 56h14v10h18.500v14h-32.500z" fill="#dedede"/></svg>
</section>
<section id="document-tabs">
<svg width="1919" height="175" viewBox="0 0 1919 175" style="left:0;top:0"><defs><linearGradient id="tgi" x1="0" y1="0" x2="0" y2="1"><stop offset="0" stop-color="#505050"/><stop offset="1" stop-color="#464646"/></linearGradient><linearGradient id="tga" x1="0" y1="0" x2="0" y2="1"><stop offset="0" stop-color="#707271"/><stop offset="1" stop-color="#5d5d5d"/></linearGradient></defs><path d="M12.0 168.6C18.0 167.6 19.5 161.6 21.0 156.6C22.5 151.6 24.0 147.6 30.0 147.6H136.5C141.5 147.6 143.5 150.6 143.5 156.6C143.5 162.6 142.5 165.6 137.5 168.6z" fill="url(#tgi)" stroke="#444444" stroke-width="1"/><path d="M138.0 168.6C144.0 167.6 145.5 161.6 147.0 156.6C148.5 151.6 150.0 147.6 156.0 147.6H260.0C265.0 147.6 267.0 150.6 267.0 156.6C267.0 162.6 266.0 165.6 261.0 168.6z" fill="url(#tgi)" stroke="#444444" stroke-width="1"/><path d="M248.4 155.600l5.800 5.800M254.2 155.600l-5.800 5.800" fill="none" stroke="#2d2d2d" stroke-width="1.900"/><path d="M261.5 168.6C267.5 167.6 269.0 161.6 270.5 156.6C272.0 151.6 273.5 147.6 279.5 147.6H425.0C430.0 147.6 432.0 150.6 432.0 156.6C432.0 162.6 431.0 165.6 426.0 168.6z" fill="url(#tgi)" stroke="#444444" stroke-width="1"/><path d="M413.6 155.600l5.800 5.800M419.4 155.600l-5.800 5.800" fill="none" stroke="#2d2d2d" stroke-width="1.900"/><path d="M426.5 168.6C432.5 167.6 434.0 161.6 435.5 156.6C437.0 151.6 438.5 147.6 444.5 147.6H555.0C560.0 147.6 562.0 150.6 562.0 156.6C562.0 162.6 561.0 165.6 556.0 168.6z" fill="url(#tgi)" stroke="#444444" stroke-width="1"/><path d="M543.5 155.600l5.800 5.800M549.3 155.600l-5.800 5.800" fill="none" stroke="#2d2d2d" stroke-width="1.900"/><path d="M556.5 168.6C562.5 167.6 564.0 161.6 565.5 156.6C567.0 151.6 568.5 147.6 574.5 147.6H678.5C683.5 147.6 685.5 150.6 685.5 156.6C685.5 162.6 684.5 165.6 679.5 168.6z" fill="url(#tgi)" stroke="#444444" stroke-width="1"/><path d="M667.6 155.600l5.800 5.800M673.4 155.600l-5.800 5.800" fill="none" stroke="#2d2d2d" stroke-width="1.900"/><path d="M679.8 169.2C685.8 168.2 687.3 162.2 688.8 157.2C690.3 151.6 691.8 147.6 697.8 147.6H799.6C805.6 147.6 807.1 151.6 808.6 157.2C810.1 162.2 811.6 168.2 817.6 169.2z" fill="url(#tga)" stroke="#707070" stroke-width="1"/><path d="M790.6 155.600l5.800 5.800M796.4 155.600l-5.800 5.800" fill="none" stroke="#2d2d2d" stroke-width="1.900"/><path d="M816 151.500h13c6 0 8 4 9.500 9 1 3.500-1 5.500-5 5.500h-4c-7 0-10-4-13.500-14.500z" fill="#4b4b4b" stroke="#414141" stroke-width="1"/><path d="M823.800 159h8.400M828 154.800v8.400" fill="none" stroke="#c4c4c4" stroke-width="2"/></svg>
<span class="t " style="left:32.30px;top:152px;font-size:12px;line-height:14px;color:#cfcfcf;font-family:'Liberation Sans',sans-serif;transform:scaleX(0.9312);">Start</span>
<span class="t " style="left:155.40px;top:152px;font-size:12px;line-height:14px;color:#cfcfcf;font-family:'Liberation Sans',sans-serif;transform:scaleX(0.9664);">Drawing1</span>
<span class="t " style="left:278.40px;top:152px;font-size:12px;line-height:14px;color:#cfcfcf;font-family:'Liberation Sans',sans-serif;transform:scaleX(1.0192);">Aksono metri furniture*</span>
<span class="t " style="left:443.30px;top:152px;font-size:12px;line-height:14px;color:#cfcfcf;font-family:'Liberation Sans',sans-serif;transform:scaleX(0.9815);">art work padestal</span>
<span class="t " style="left:573.20px;top:152px;font-size:12px;line-height:14px;color:#cfcfcf;font-family:'Liberation Sans',sans-serif;">baground panel</span>
<span class="t " style="left:697.20px;top:152px;font-size:12px;line-height:14px;color:#f4f4f4;font-family:'Liberation Sans',sans-serif;transform:scaleX(0.8931);">BED HEAD</span>
<div class="b" style="left:0px;top:169px;width:1919px;height:4px;background:#5e5e5e;"></div>
<span class="t " style="left:3.80px;top:180px;font-size:12px;line-height:14px;color:#ededed;font-family:'Liberation Sans',sans-serif;transform:scaleX(1.0276);">[−][Top][2D Wireframe]</span>
</section>
<section id="drawing-model-space">
<svg width="1912" height="830" viewBox="0 173 1912 830" style="left:0;top:173px"><path d="M538 509.5h1M540 510.5h1M542 553.5h1M542 611.5h1M543 470.5h1M543 480.5h1M544 551.5h1M545 478.5h1M546 604.5h1M546 630.5h1M547 619.5h1M549 551.5h1M549 631.5h1M550 464.5h1M550 523.5h1M550 589.5h1M553 472.5h1M553 534.5h1M553 590.5h1M554 491.5h1M555 459.5h1M555 532.5h1M556 503.5h1M557 461.5h1M557 586.5h1M558 615.5h1M559 628.5h1M561 500.5h1M563 505.5h1M563 514.5h1M563 603.5h1M564 501.5h1M567 594.5h1M569 457.5h1M569 489.5h1M570 470.5h1M570 603.5h1M572 534.5h1M573 523.5h1M574 542.5h1M575 512.5h1M576 463.5h1M576 478.5h1M576 578.5h1M577 554.5h1M577 595.5h1M577 630.5h1M579 525.5h1M579 596.5h1M580 545.5h1M580 565.5h1M580 587.5h1M580 605.5h1M581 461.5h1M581 540.5h1M581 589.5h1M582 511.5h1M582 520.5h1M582 534.5h1M582 543.5h1M582 560.5h1M584 592.5h1M585 481.5h1M585 631.5h1M586 488.5h1M586 569.5h1M586 586.5h1M586 603.5h1M587 459.5h1M587 467.5h1M587 506.5h1M588 574.5h1M588 619.5h1M589 457.5h1M589 465.5h1M590 507.5h1M590 511.5h1M591 482.5h1M591 620.5h1M592 625.5h1M593 504.5h1M593 515.5h1M595 570.5h1M595 582.5h1M595 625.5h1M596 467.5h1M596 612.5h1M597 635.5h1M598 600.5h1M598 610.5h1M600 455.5h1M600 580.5h1M600 585.5h1M602 506.5h1M602 513.5h1M603 605.5h1M604 515.5h1M604 542.5h1M604 570.5h1M604 634.5h1M605 478.5h1M605 618.5h1M606 518.5h1M606 582.5h1M606 635.5h1M607 553.5h1M607 558.5h1M608 520.5h1M608 533.5h1M608 603.5h1M609 535.5h1M609 606.5h1M610 601.5h1M610 608.5h1M610 614.5h1M611 479.5h1M611 517.5h1M611 628.5h1M612 509.5h1M612 612.5h1M615 529.5h1M616 534.5h1M617 486.5h1M617 500.5h1M617 513.5h1M619 506.5h1M619 600.5h1M619 616.5h1M620 500.5h1M620 508.5h1M620 513.5h1M620 595.5h1M621 614.5h1M623 471.5h1M624 540.5h1M624 581.5h1M626 495.5h1M626 591.5h1M628 477.5h1M628 629.5h1M629 512.5h1M630 504.5h1M630 559.5h1M631 591.5h1M631 615.5h1M631 630.5h1M632 526.5h1M633 607.5h1M634 542.5h1M635 488.5h1M635 502.5h1M635 518.5h1M639 476.5h1M639 506.5h1M639 617.5h1M639 627.5h1M640 629.5h1M642 585.5h1M644 532.5h1M644 586.5h1M644 604.5h1M645 468.5h1M645 489.5h1M645 502.5h1M645 541.5h1M646 455.5h1M646 534.5h1M647 517.5h1M647 560.5h1M648 623.5h1M649 455.5h1M649 471.5h1M649 590.5h1M650 546.5h1M651 557.5h1M652 544.5h1M652 568.5h1M654 463.5h1M655 633.5h1M657 615.5h1M659 491.5h1M659 530.5h1M659 617.5h1M660 493.5h1M660 578.5h1M660 600.5h1M663 496.5h1M663 613.5h1M665 470.5h1M665 476.5h1M665 503.5h1M667 592.5h1M668 457.5h1M668 516.5h1M669 500.5h1M669 534.5h1M669 561.5h1M669 568.5h1M670 517.5h1M670 554.5h1M671 539.5h1M672 501.5h1M674 573.5h1M674 587.5h1M675 518.5h1M676 541.5h1M676 606.5h1M677 601.5h1M677 625.5h1M678 470.5h1M678 524.5h1M679 498.5h1M680 516.5h1M680 559.5h1M680 610.5h1M681 484.5h1M681 509.5h1M682 549.5h1M682 627.5h1M683 537.5h1M684 547.5h1M684 578.5h1M686 487.5h1M691 541.5h1M692 575.5h1M693 460.5h1M693 491.5h1M696 621.5h1M698 482.5h1M699 504.5h1M699 513.5h1M699 534.5h1M699 609.5h1M701 489.5h1M702 505.5h1M703 476.5h1M705 558.5h1M705 567.5h1M706 530.5h1M707 623.5h1M708 458.5h1M708 468.5h1M708 625.5h1M709 630.5h1M710 466.5h1M710 540.5h1M710 555.5h1M710 588.5h1M711 572.5h1M711 590.5h1M712 521.5h1M712 556.5h1M712 564.5h1M713 566.5h1M713 570.5h1M714 523.5h1M716 455.5h1M716 584.5h1M717 465.5h1M718 476.5h1M718 611.5h1M719 456.5h1M720 590.5h1M721 510.5h1M721 547.5h1M723 457.5h1M723 490.5h1M724 568.5h1M725 485.5h1M725 488.5h1M725 590.5h1M726 466.5h1M726 494.5h1M726 532.5h1M726 550.5h1M727 487.5h1M727 603.5h1M728 534.5h1M729 578.5h1M730 595.5h1M731 462.5h1M733 552.5h1M733 615.5h1M734 484.5h1M734 511.5h1M735 472.5h1M735 495.5h1M735 575.5h1M736 632.5h1M737 611.5h1M738 520.5h1M739 544.5h1M739 609.5h1M739 628.5h1M740 562.5h1M741 626.5h1M742 467.5h1M742 617.5h1M743 482.5h1M743 584.5h1M744 499.5h1M744 615.5h1M745 474.5h1M745 504.5h1M745 600.5h1M747 485.5h1M747 630.5h1M748 569.5h1M748 574.5h1M748 592.5h1M748 625.5h1M749 558.5h1M750 495.5h1M751 504.5h1M751 633.5h1M752 473.5h1M752 613.5h1M752 619.5h1M753 467.5h1M753 527.5h1M753 562.5h1M753 607.5h1M754 517.5h1M755 619.5h1M756 562.5h1M756 622.5h1M757 463.5h1M757 581.5h1M758 506.5h1M760 559.5h1M762 589.5h1M763 542.5h1M763 573.5h1M764 521.5h1M765 563.5h1M765 574.5h1M765 589.5h1M766 482.5h1M766 542.5h1M767 614.5h1M768 518.5h1M768 616.5h1M769 537.5h1M769 585.5h1M769 598.5h1M769 622.5h1M770 463.5h1M770 503.5h1M770 547.5h1M771 485.5h1M771 505.5h1M772 457.5h1M772 465.5h1M774 459.5h1M775 531.5h1M775 538.5h1M776 579.5h1M777 564.5h1M777 625.5h1M778 493.5h1M778 551.5h1M779 525.5h1M781 546.5h1M781 616.5h1M782 494.5h1M783 521.5h1M784 460.5h1M784 482.5h1M784 492.5h1M785 511.5h1M785 602.5h1M786 558.5h1M786 573.5h1M786 630.5h1M788 588.5h1M789 530.5h1M790 579.5h1M792 506.5h1M793 456.5h1M793 481.5h1M793 516.5h1M793 580.5h1M793 604.5h1M794 586.5h1M795 622.5h1M795 630.5h1M796 617.5h1M796 632.5h1M797 619.5h1M798 561.5h1M799 490.5h1M800 528.5h1M801 545.5h1M802 557.5h1M802 587.5h1M802 635.5h1M803 514.5h1M804 499.5h1M804 581.5h1M805 557.5h1M805 604.5h1M806 536.5h1M807 461.5h1M807 557.5h1M808 529.5h1M808 587.5h1M809 459.5h1M809 601.5h1M811 464.5h1M811 618.5h1M812 537.5h1M813 473.5h1M813 507.5h1M813 572.5h1M814 494.5h1M814 633.5h1M815 508.5h1M815 526.5h1M815 611.5h1M816 584.5h1M816 589.5h1M816 599.5h1M817 533.5h1M818 502.5h1M818 514.5h1M819 531.5h1M819 562.5h1M819 590.5h1M819 593.5h1M820 476.5h1M822 625.5h1M823 551.5h1M824 484.5h1M824 503.5h1M824 522.5h1M824 529.5h1M824 627.5h1M825 471.5h1M826 482.5h1M826 600.5h1M827 559.5h1M827 616.5h1M829 607.5h1M829 614.5h1M829 622.5h1M829 629.5h1M830 545.5h1M831 458.5h1M832 607.5h1M834 631.5h1M835 572.5h1M835 633.5h1M836 458.5h1M836 536.5h1M837 465.5h1M837 554.5h1M839 466.5h1M839 515.5h1M840 505.5h1M841 635.5h1M842 503.5h1M842 556.5h1M842 585.5h1M843 469.5h1M843 494.5h1M843 626.5h1M844 534.5h1M844 587.5h1M844 617.5h1M845 462.5h1M845 481.5h1M845 492.5h1M845 522.5h1M845 550.5h1M845 575.5h1M847 475.5h1M847 497.5h1M847 635.5h1M850 630.5h1M851 605.5h1M852 473.5h1M852 495.5h1M852 502.5h1M852 586.5h1M856 571.5h1M857 458.5h1M857 464.5h1M857 519.5h1M857 546.5h1M857 561.5h1M857 624.5h1M859 547.5h1M860 465.5h1M860 484.5h1M860 592.5h1M862 465.5h1M862 560.5h1M862 622.5h1M863 517.5h1M863 551.5h1M864 568.5h1M864 624.5h1M865 459.5h1M865 484.5h1M865 497.5h1M865 530.5h1M865 552.5h1M865 614.5h1M866 509.5h1M866 602.5h1M867 495.5h1M869 551.5h1M870 495.5h1M871 507.5h1M871 552.5h1M871 563.5h1M872 607.5h1M872 612.5h1M873 524.5h1M873 618.5h1M874 515.5h1M874 538.5h1M875 568.5h1M875 579.5h1M876 595.5h1M877 476.5h1M877 530.5h1M878 519.5h1M879 595.5h1M881 519.5h1M881 552.5h1M882 489.5h1M882 535.5h1M884 491.5h1M884 556.5h1M884 616.5h1M886 558.5h1M887 478.5h1M887 562.5h1M888 459.5h1M888 497.5h1M888 576.5h1M889 490.5h1M889 554.5h1M890 567.5h1M891 569.5h1M893 549.5h1M893 574.5h1M895 606.5h1M896 465.5h1M896 534.5h1M897 485.5h1M897 590.5h1M899 480.5h1M900 500.5h1M900 520.5h1M900 526.5h1M900 556.5h1M902 511.5h1M902 576.5h1M903 457.5h1M903 500.5h1M903 527.5h1M903 562.5h1M904 590.5h1M904 614.5h1M905 486.5h1M905 505.5h1M905 576.5h1M906 472.5h1M907 626.5h1M908 545.5h1M909 599.5h1M910 539.5h1M910 557.5h1M911 587.5h1M912 599.5h1M913 631.5h1M915 481.5h1M916 549.5h1M916 599.5h1M916 612.5h1M916 635.5h1M918 551.5h1M919 489.5h1M919 495.5h1M919 621.5h1M920 521.5h1M921 459.5h1M921 556.5h1M922 527.5h1M922 586.5h1M923 542.5h1M924 575.5h1M925 626.5h1M926 466.5h1M928 556.5h1M928 596.5h1M929 501.5h1M930 492.5h1M930 565.5h1M931 525.5h1M931 567.5h1M932 473.5h1M933 478.5h1M933 517.5h1M933 537.5h1M935 479.5h1M936 460.5h1M936 573.5h1M937 612.5h1M938 567.5h1M938 623.5h1M939 584.5h1M941 490.5h1M941 594.5h1M942 462.5h1M943 464.5h1M943 599.5h1M944 601.5h1M945 467.5h1M945 504.5h1M945 542.5h1M948 485.5h1M948 553.5h1M948 635.5h1M949 473.5h1M949 533.5h1M949 586.5h1M950 634.5h1M951 549.5h1M952 533.5h1M952 543.5h1M952 620.5h1M952 632.5h1M953 460.5h1M955 490.5h1M955 558.5h1M956 595.5h1M956 611.5h1M958 596.5h1M958 631.5h1M959 457.5h1M959 576.5h1M960 481.5h1M961 552.5h1M961 631.5h1M963 590.5h1M963 598.5h1M964 503.5h1M964 562.5h1M965 505.5h1M966 573.5h1M966 606.5h1M967 474.5h1M967 593.5h1M968 628.5h1M969 598.5h1M970 506.5h1M970 611.5h1M971 480.5h1M971 529.5h1M971 552.5h1M973 491.5h1M975 605.5h1M976 507.5h1M976 574.5h1M979 507.5h1M980 582.5h1M980 616.5h1M984 561.5h1M985 575.5h1M986 537.5h1M986 616.5h1M987 566.5h1M987 629.5h1M988 509.5h1M988 516.5h1M988 583.5h1M988 592.5h1M989 491.5h1M989 527.5h1M989 578.5h1M990 486.5h1M992 479.5h1M992 546.5h1M994 457.5h1M994 570.5h1M995 554.5h1M996 556.5h1M997 535.5h1M998 635.5h1M999 474.5h1M999 612.5h1M1000 501.5h1M1000 531.5h1M1000 630.5h1M1001 550.5h1M1001 600.5h1M1002 475.5h1M1002 587.5h1M1003 513.5h1M1004 534.5h1M1004 601.5h1M1005 526.5h1M1005 628.5h1M1006 466.5h1M1006 492.5h1M1006 507.5h1M1006 514.5h1M1006 542.5h1" stroke="#f000f0" stroke-width="1" fill="none" shape-rendering="crispEdges"/><line x1="1025.50" y1="440.30" x2="1342.00" y2="440.30" stroke="#e800e8" stroke-width="1.5" stroke-dasharray="1.700 4.900"/><line x1="536.50" y1="442.70" x2="1007.70" y2="442.70" stroke="#8a8a8a" stroke-width="1.45" /><line x1="536.50" y1="445.50" x2="1007.70" y2="445.50" stroke="#8a8a8a" stroke-width="1.45" /><line x1="536.50" y1="448.10" x2="1007.70" y2="448.10" stroke="#8a8a8a" stroke-width="1.45" /><line x1="536.50" y1="450.70" x2="1007.70" y2="450.70" stroke="#8a8a8a" stroke-width="1.45" /><line x1="525.50" y1="454.00" x2="525.50" y2="635.60" stroke="#8a8a8a" stroke-width="1.45" /><line x1="528.40" y1="454.00" x2="528.40" y2="635.60" stroke="#8a8a8a" stroke-width="1.45" /><line x1="530.90" y1="454.00" x2="530.90" y2="635.60" stroke="#8a8a8a" stroke-width="1.45" /><line x1="533.50" y1="454.00" x2="533.50" y2="635.60" stroke="#8a8a8a" stroke-width="1.45" /><line x1="1010.60" y1="454.00" x2="1010.60" y2="635.60" stroke="#8a8a8a" stroke-width="1.45" /><line x1="1013.20" y1="454.00" x2="1013.20" y2="635.60" stroke="#8a8a8a" stroke-width="1.45" /><line x1="1015.70" y1="454.00" x2="1015.70" y2="635.60" stroke="#8a8a8a" stroke-width="1.45" /><line x1="1018.60" y1="454.00" x2="1018.60" y2="635.60" stroke="#8a8a8a" stroke-width="1.45" /><line x1="261.60" y1="623.50" x2="522.60" y2="623.50" stroke="#8a8a8a" stroke-width="1.3" /><line x1="1021.60" y1="623.50" x2="1282.80" y2="623.50" stroke="#8a8a8a" stroke-width="1.3" /><line x1="261.60" y1="625.70" x2="522.60" y2="625.70" stroke="#8a8a8a" stroke-width="1.3" /><line x1="1021.60" y1="625.70" x2="1282.80" y2="625.70" stroke="#8a8a8a" stroke-width="1.3" /><path d="M305.45 793.90V636.500H478.55V793.90" fill="none" stroke="#e60000" stroke-width="1.200"/><path d="M313.40 793.90V644.400H470.60V793.90" fill="none" stroke="#e60000" stroke-width="1.200"/><line x1="313.40" y1="683.60" x2="470.60" y2="683.60" stroke="#e60000" stroke-width="1.2" /><line x1="313.70" y1="644.00" x2="313.70" y2="684.00" stroke="#8a8a8a" stroke-width="1" /><line x1="470.30" y1="644.00" x2="470.30" y2="684.00" stroke="#8a8a8a" stroke-width="1" /><line x1="315.30" y1="644.00" x2="315.30" y2="684.00" stroke="#8a8a8a" stroke-width="1" /><line x1="468.70" y1="644.00" x2="468.70" y2="684.00" stroke="#8a8a8a" stroke-width="1" /><line x1="317.50" y1="644.00" x2="317.50" y2="684.00" stroke="#8a8a8a" stroke-width="1" /><line x1="466.50" y1="644.00" x2="466.50" y2="684.00" stroke="#8a8a8a" stroke-width="1" /><line x1="319.70" y1="644.00" x2="319.70" y2="684.00" stroke="#8a8a8a" stroke-width="1" /><line x1="464.30" y1="644.00" x2="464.30" y2="684.00" stroke="#8a8a8a" stroke-width="1" /><line x1="321.80" y1="644.00" x2="321.80" y2="684.00" stroke="#8a8a8a" stroke-width="1" /><line x1="462.20" y1="644.00" x2="462.20" y2="684.00" stroke="#8a8a8a" stroke-width="1" /><line x1="325.30" y1="644.00" x2="325.30" y2="684.00" stroke="#8a8a8a" stroke-width="1" /><line x1="458.70" y1="644.00" x2="458.70" y2="684.00" stroke="#8a8a8a" stroke-width="1" /><line x1="331.40" y1="644.00" x2="331.40" y2="684.00" stroke="#8a8a8a" stroke-width="1" /><line x1="452.60" y1="644.00" x2="452.60" y2="684.00" stroke="#8a8a8a" stroke-width="1" /><line x1="339.20" y1="644.00" x2="339.20" y2="684.00" stroke="#8a8a8a" stroke-width="1" /><line x1="444.80" y1="644.00" x2="444.80" y2="684.00" stroke="#8a8a8a" stroke-width="1" /><line x1="348.80" y1="644.00" x2="348.80" y2="684.00" stroke="#8a8a8a" stroke-width="1" /><line x1="435.20" y1="644.00" x2="435.20" y2="684.00" stroke="#8a8a8a" stroke-width="1" /><line x1="360.20" y1="644.00" x2="360.20" y2="684.00" stroke="#8a8a8a" stroke-width="1" /><line x1="423.80" y1="644.00" x2="423.80" y2="684.00" stroke="#8a8a8a" stroke-width="1" /><rect x="371.25" y="662.300" width="41.500" height="4.200" fill="none" stroke="#8f4c46" stroke-width="1"/><path d="M1065.40 793.90V636.500H1238.50V793.90" fill="none" stroke="#e60000" stroke-width="1.200"/><path d="M1073.35 793.90V644.400H1230.55V793.90" fill="none" stroke="#e60000" stroke-width="1.200"/><line x1="1073.35" y1="683.60" x2="1230.55" y2="683.60" stroke="#e60000" stroke-width="1.2" /><line x1="1073.65" y1="644.00" x2="1073.65" y2="684.00" stroke="#8a8a8a" stroke-width="1" /><line x1="1230.25" y1="644.00" x2="1230.25" y2="684.00" stroke="#8a8a8a" stroke-width="1" /><line x1="1075.25" y1="644.00" x2="1075.25" y2="684.00" stroke="#8a8a8a" stroke-width="1" /><line x1="1228.65" y1="644.00" x2="1228.65" y2="684.00" stroke="#8a8a8a" stroke-width="1" /><line x1="1077.45" y1="644.00" x2="1077.45" y2="684.00" stroke="#8a8a8a" stroke-width="1" /><line x1="1226.45" y1="644.00" x2="1226.45" y2="684.00" stroke="#8a8a8a" stroke-width="1" /><line x1="1079.65" y1="644.00" x2="1079.65" y2="684.00" stroke="#8a8a8a" stroke-width="1" /><line x1="1224.25" y1="644.00" x2="1224.25" y2="684.00" stroke="#8a8a8a" stroke-width="1" /><line x1="1081.75" y1="644.00" x2="1081.75" y2="684.00" stroke="#8a8a8a" stroke-width="1" /><line x1="1222.15" y1="644.00" x2="1222.15" y2="684.00" stroke="#8a8a8a" stroke-width="1" /><line x1="1085.25" y1="644.00" x2="1085.25" y2="684.00" stroke="#8a8a8a" stroke-width="1" /><line x1="1218.65" y1="644.00" x2="1218.65" y2="684.00" stroke="#8a8a8a" stroke-width="1" /><line x1="1091.35" y1="644.00" x2="1091.35" y2="684.00" stroke="#8a8a8a" stroke-width="1" /><line x1="1212.55" y1="644.00" x2="1212.55" y2="684.00" stroke="#8a8a8a" stroke-width="1" /><line x1="1099.15" y1="644.00" x2="1099.15" y2="684.00" stroke="#8a8a8a" stroke-width="1" /><line x1="1204.75" y1="644.00" x2="1204.75" y2="684.00" stroke="#8a8a8a" stroke-width="1" /><line x1="1108.75" y1="644.00" x2="1108.75" y2="684.00" stroke="#8a8a8a" stroke-width="1" /><line x1="1195.15" y1="644.00" x2="1195.15" y2="684.00" stroke="#8a8a8a" stroke-width="1" /><line x1="1120.15" y1="644.00" x2="1120.15" y2="684.00" stroke="#8a8a8a" stroke-width="1" /><line x1="1183.75" y1="644.00" x2="1183.75" y2="684.00" stroke="#8a8a8a" stroke-width="1" /><rect x="1131.20" y="662.300" width="41.500" height="4.200" fill="none" stroke="#8f4c46" stroke-width="1"/><rect x="273.400" y="636.600" width="20" height="19.900" fill="none" stroke="#e60000" stroke-width="1.200"/><rect x="1250.400" y="636.600" width="20.400" height="19.900" fill="none" stroke="#e60000" stroke-width="1.200"/><line x1="255.00" y1="823.10" x2="1289.00" y2="823.10" stroke="#754040" stroke-width="1.5" /><line x1="255.00" y1="851.40" x2="1289.00" y2="851.40" stroke="#754040" stroke-width="1.5" /><line x1="1015.00" y1="595.00" x2="1289.00" y2="595.00" stroke="#754040" stroke-width="1.5" /><line x1="1313.50" y1="434.00" x2="1313.50" y2="800.00" stroke="#754040" stroke-width="1.3" /><line x1="1342.50" y1="434.00" x2="1342.50" y2="800.00" stroke="#754040" stroke-width="1.3" /><line x1="1048.70" y1="626.00" x2="1048.70" y2="799.00" stroke="#754040" stroke-width="1.3" /><line x1="261.10" y1="815.00" x2="261.10" y2="829.00" stroke="#754040" stroke-width="1.3" /><line x1="305.50" y1="815.00" x2="305.50" y2="829.00" stroke="#754040" stroke-width="1.3" /><line x1="313.40" y1="815.00" x2="313.40" y2="829.00" stroke="#754040" stroke-width="1.3" /><line x1="470.60" y1="815.00" x2="470.60" y2="829.00" stroke="#754040" stroke-width="1.3" /><line x1="478.50" y1="815.00" x2="478.50" y2="829.00" stroke="#754040" stroke-width="1.3" /><line x1="523.30" y1="815.00" x2="523.30" y2="829.00" stroke="#754040" stroke-width="1.3" /><line x1="1021.00" y1="815.00" x2="1021.00" y2="829.00" stroke="#754040" stroke-width="1.3" /><line x1="1065.40" y1="815.00" x2="1065.40" y2="829.00" stroke="#754040" stroke-width="1.3" /><line x1="1073.40" y1="815.00" x2="1073.40" y2="829.00" stroke="#754040" stroke-width="1.3" /><line x1="1230.60" y1="815.00" x2="1230.60" y2="829.00" stroke="#754040" stroke-width="1.3" /><line x1="1238.60" y1="815.00" x2="1238.60" y2="829.00" stroke="#754040" stroke-width="1.3" /><line x1="1283.30" y1="815.00" x2="1283.30" y2="829.00" stroke="#754040" stroke-width="1.3" /><line x1="261.10" y1="843.50" x2="261.10" y2="857.50" stroke="#754040" stroke-width="1.3" /><line x1="1283.30" y1="843.50" x2="1283.30" y2="857.50" stroke="#754040" stroke-width="1.3" /><line x1="1021.00" y1="589.00" x2="1021.00" y2="603.00" stroke="#754040" stroke-width="1.3" /><line x1="1283.30" y1="589.00" x2="1283.30" y2="603.00" stroke="#754040" stroke-width="1.3" /><line x1="1043.00" y1="636.40" x2="1061.00" y2="636.40" stroke="#754040" stroke-width="1.2" /><line x1="1043.00" y1="644.40" x2="1061.00" y2="644.40" stroke="#754040" stroke-width="1.2" /><line x1="1043.00" y1="683.60" x2="1061.00" y2="683.60" stroke="#754040" stroke-width="1.2" /><line x1="1043.00" y1="793.90" x2="1061.00" y2="793.90" stroke="#754040" stroke-width="1.2" /><line x1="1297.00" y1="610.60" x2="1319.00" y2="610.60" stroke="#754040" stroke-width="1.2" /><line x1="1297.00" y1="624.20" x2="1319.00" y2="624.20" stroke="#754040" stroke-width="1.2" /><line x1="1290.00" y1="793.90" x2="1348.00" y2="793.90" stroke="#754040" stroke-width="1" stroke-dasharray="6 20 8 60"/><path d="M360 586H289.500L280.200 651.500" fill="none" stroke="#85504a" stroke-width="1.200"/><path d="M483 586H394L388.300 626" fill="none" stroke="#85504a" stroke-width="1.200"/><path d="M261 793.900V610.600H523.100M1021 610.600H1283.300V793.900M261 793.900H1283.300M523.100 793.900V440.400H1021V793.900M523.100 453.400H1021M536.200 440.400V636.200M1007.900 440.400V636.200M523.100 636.200H1021" fill="none" stroke="#00df00" stroke-width="1.250" stroke-linejoin="miter"/><line x1="255.10" y1="823.10" x2="267.10" y2="823.10" stroke="#f4f400" stroke-width="0.9" /><line x1="256.50" y1="827.01" x2="265.70" y2="819.19" stroke="#f4f400" stroke-width="2.6" /><line x1="299.50" y1="823.10" x2="311.50" y2="823.10" stroke="#f4f400" stroke-width="0.9" /><line x1="300.90" y1="827.01" x2="310.10" y2="819.19" stroke="#f4f400" stroke-width="2.6" /><line x1="307.40" y1="823.10" x2="319.40" y2="823.10" stroke="#f4f400" stroke-width="0.9" /><line x1="308.80" y1="827.01" x2="318.00" y2="819.19" stroke="#f4f400" stroke-width="2.6" /><line x1="464.60" y1="823.10" x2="476.60" y2="823.10" stroke="#f4f400" stroke-width="0.9" /><line x1="466.00" y1="827.01" x2="475.20" y2="819.19" stroke="#f4f400" stroke-width="2.6" /><line x1="472.50" y1="823.10" x2="484.50" y2="823.10" stroke="#f4f400" stroke-width="0.9" /><line x1="473.90" y1="827.01" x2="483.10" y2="819.19" stroke="#f4f400" stroke-width="2.6" /><line x1="517.30" y1="823.10" x2="529.30" y2="823.10" stroke="#f4f400" stroke-width="0.9" /><line x1="518.70" y1="827.01" x2="527.90" y2="819.19" stroke="#f4f400" stroke-width="2.6" /><line x1="1015.00" y1="823.10" x2="1027.00" y2="823.10" stroke="#f4f400" stroke-width="0.9" /><line x1="1016.40" y1="827.01" x2="1025.60" y2="819.19" stroke="#f4f400" stroke-width="2.6" /><line x1="1059.40" y1="823.10" x2="1071.40" y2="823.10" stroke="#f4f400" stroke-width="0.9" /><line x1="1060.80" y1="827.01" x2="1070.00" y2="819.19" stroke="#f4f400" stroke-width="2.6" /><line x1="1067.40" y1="823.10" x2="1079.40" y2="823.10" stroke="#f4f400" stroke-width="0.9" /><line x1="1068.80" y1="827.01" x2="1078.00" y2="819.19" stroke="#f4f400" stroke-width="2.6" /><line x1="1224.60" y1="823.10" x2="1236.60" y2="823.10" stroke="#f4f400" stroke-width="0.9" /><line x1="1226.00" y1="827.01" x2="1235.20" y2="819.19" stroke="#f4f400" stroke-width="2.6" /><line x1="1232.60" y1="823.10" x2="1244.60" y2="823.10" stroke="#f4f400" stroke-width="0.9" /><line x1="1234.00" y1="827.01" x2="1243.20" y2="819.19" stroke="#f4f400" stroke-width="2.6" /><line x1="1277.30" y1="823.10" x2="1289.30" y2="823.10" stroke="#f4f400" stroke-width="0.9" /><line x1="1278.70" y1="827.01" x2="1287.90" y2="819.19" stroke="#f4f400" stroke-width="2.6" /><line x1="255.10" y1="851.40" x2="267.10" y2="851.40" stroke="#f4f400" stroke-width="0.9" /><line x1="256.50" y1="855.31" x2="265.70" y2="847.49" stroke="#f4f400" stroke-width="2.6" /><line x1="1277.30" y1="851.40" x2="1289.30" y2="851.40" stroke="#f4f400" stroke-width="0.9" /><line x1="1278.70" y1="855.31" x2="1287.90" y2="847.49" stroke="#f4f400" stroke-width="2.6" /><line x1="1015.00" y1="595.00" x2="1027.00" y2="595.00" stroke="#f4f400" stroke-width="0.9" /><line x1="1016.40" y1="598.91" x2="1025.60" y2="591.09" stroke="#f4f400" stroke-width="2.6" /><line x1="1277.30" y1="595.00" x2="1289.30" y2="595.00" stroke="#f4f400" stroke-width="0.9" /><line x1="1278.70" y1="598.91" x2="1287.90" y2="591.09" stroke="#f4f400" stroke-width="2.6" /><line x1="1313.50" y1="434.30" x2="1313.50" y2="446.30" stroke="#f4f400" stroke-width="0.9" /><line x1="1309.59" y1="435.70" x2="1317.41" y2="444.90" stroke="#f4f400" stroke-width="2.6" /><line x1="1313.50" y1="604.60" x2="1313.50" y2="616.60" stroke="#f4f400" stroke-width="0.9" /><line x1="1309.59" y1="606.00" x2="1317.41" y2="615.20" stroke="#f4f400" stroke-width="2.6" /><line x1="1313.50" y1="618.20" x2="1313.50" y2="630.20" stroke="#f4f400" stroke-width="0.9" /><line x1="1309.59" y1="619.60" x2="1317.41" y2="628.80" stroke="#f4f400" stroke-width="2.6" /><line x1="1313.50" y1="787.90" x2="1313.50" y2="799.90" stroke="#f4f400" stroke-width="0.9" /><line x1="1309.59" y1="789.30" x2="1317.41" y2="798.50" stroke="#f4f400" stroke-width="2.6" /><line x1="1342.50" y1="434.30" x2="1342.50" y2="446.30" stroke="#f4f400" stroke-width="0.9" /><line x1="1338.59" y1="435.70" x2="1346.41" y2="444.90" stroke="#f4f400" stroke-width="2.6" /><line x1="1342.50" y1="787.90" x2="1342.50" y2="799.90" stroke="#f4f400" stroke-width="0.9" /><line x1="1338.59" y1="789.30" x2="1346.41" y2="798.50" stroke="#f4f400" stroke-width="2.6" /><line x1="1048.70" y1="630.40" x2="1048.70" y2="642.40" stroke="#f4f400" stroke-width="0.9" /><line x1="1044.79" y1="631.80" x2="1052.61" y2="641.00" stroke="#f4f400" stroke-width="2.6" /><line x1="1048.70" y1="638.40" x2="1048.70" y2="650.40" stroke="#f4f400" stroke-width="0.9" /><line x1="1044.79" y1="639.80" x2="1052.61" y2="649.00" stroke="#f4f400" stroke-width="2.6" /><line x1="1048.70" y1="677.60" x2="1048.70" y2="689.60" stroke="#f4f400" stroke-width="0.9" /><line x1="1044.79" y1="679.00" x2="1052.61" y2="688.20" stroke="#f4f400" stroke-width="2.6" /><line x1="1048.70" y1="787.90" x2="1048.70" y2="799.90" stroke="#f4f400" stroke-width="0.9" /><line x1="1044.79" y1="789.30" x2="1052.61" y2="798.50" stroke="#f4f400" stroke-width="2.6" /><rect x="260.6" y="810.0" width="1.100" height="1.100" fill="#ff0000"/><rect x="522.8" y="810.0" width="1.100" height="1.100" fill="#ff0000"/><rect x="1020.5" y="810.0" width="1.100" height="1.100" fill="#ff0000"/><rect x="1282.8" y="810.0" width="1.100" height="1.100" fill="#ff0000"/><rect x="305.0" y="822.6" width="1.100" height="1.100" fill="#ff0000"/><rect x="312.9" y="822.6" width="1.100" height="1.100" fill="#ff0000"/><rect x="470.1" y="822.6" width="1.100" height="1.100" fill="#ff0000"/><rect x="478.0" y="822.6" width="1.100" height="1.100" fill="#ff0000"/><rect x="1064.9" y="822.6" width="1.100" height="1.100" fill="#ff0000"/><rect x="1072.9" y="822.6" width="1.100" height="1.100" fill="#ff0000"/><rect x="1230.1" y="822.6" width="1.100" height="1.100" fill="#ff0000"/><rect x="1238.1" y="822.6" width="1.100" height="1.100" fill="#ff0000"/><rect x="260.6" y="838.2" width="1.100" height="1.100" fill="#ff0000"/><rect x="260.6" y="850.9" width="1.100" height="1.100" fill="#ff0000"/><rect x="1282.8" y="838.2" width="1.100" height="1.100" fill="#ff0000"/><rect x="1020.5" y="605.5" width="1.100" height="1.100" fill="#ff0000"/><rect x="1282.8" y="605.5" width="1.100" height="1.100" fill="#ff0000"/><rect x="1295.5" y="793.4" width="1.100" height="1.100" fill="#ff0000"/><rect x="1324.5" y="793.4" width="1.100" height="1.100" fill="#ff0000"/><rect x="1313.0" y="793.4" width="1.100" height="1.100" fill="#ff0000"/><rect x="1342.0" y="793.4" width="1.100" height="1.100" fill="#ff0000"/><rect x="1020.5" y="594.5" width="1.100" height="1.100" fill="#ff0000"/><rect x="1048.2" y="643.9" width="1.100" height="1.100" fill="#ff0000"/><rect x="1048.2" y="635.9" width="1.100" height="1.100" fill="#ff0000"/><text x="296.60" y="569.70" font-family="'DejaVu Sans','Liberation Sans',sans-serif" font-weight="200" font-size="15.6" fill="#00e800" stroke="#00e800" stroke-width="0.3" textLength="38.40" lengthAdjust="spacingAndGlyphs">STOP</text><text x="296.60" y="583.10" font-family="'DejaVu Sans','Liberation Sans',sans-serif" font-weight="200" font-size="15.6" fill="#00e800" stroke="#00e800" stroke-width="0.3" textLength="60.80" lengthAdjust="spacingAndGlyphs">KONTAK</text><text x="394.10" y="583.10" font-family="'DejaVu Sans','Liberation Sans',sans-serif" font-weight="200" font-size="15.6" fill="#00e800" stroke="#00e800" stroke-width="0.3" textLength="89.30" lengthAdjust="spacingAndGlyphs">NAT 0,5Cm</text><text x="686.30" y="557.10" font-family="'DejaVu Sans','Liberation Sans',sans-serif" font-weight="200" font-size="15.6" fill="#00e800" stroke="#00e800" stroke-width="0.3" textLength="135.50" lengthAdjust="spacingAndGlyphs">POEF/SANDARAN</text><text x="741.40" y="716.60" font-family="'DejaVu Sans','Liberation Sans',sans-serif" font-weight="200" font-size="15.6" fill="#00e800" stroke="#00e800" stroke-width="0.3" textLength="28.90" lengthAdjust="spacingAndGlyphs">BED</text><text x="725.00" y="733.70" font-family="'DejaVu Sans','Liberation Sans',sans-serif" font-weight="200" font-size="15.6" fill="#00e800" stroke="#00e800" stroke-width="0.3" textLength="65.40" lengthAdjust="spacingAndGlyphs">180x200</text><text x="275.10" y="814.60" font-family="'DejaVu Sans Condensed','DejaVu Sans','Liberation Sans',sans-serif" font-weight="400" font-size="17.8" fill="#f4f400" textLength="19.90" lengthAdjust="spacingAndGlyphs">170</text><text x="301.90" y="814.60" font-family="'DejaVu Sans Condensed','DejaVu Sans','Liberation Sans',sans-serif" font-weight="400" font-size="17.8" fill="#f4f400" textLength="14.10" lengthAdjust="spacingAndGlyphs">30</text><text x="381.30" y="817.90" font-family="'DejaVu Sans Condensed','DejaVu Sans','Liberation Sans',sans-serif" font-weight="400" font-size="17.8" fill="#f4f400" textLength="22.10" lengthAdjust="spacingAndGlyphs">600</text><text x="468.80" y="814.60" font-family="'DejaVu Sans Condensed','DejaVu Sans','Liberation Sans',sans-serif" font-weight="400" font-size="17.8" fill="#f4f400" textLength="13.80" lengthAdjust="spacingAndGlyphs">30</text><text x="489.70" y="814.60" font-family="'DejaVu Sans Condensed','DejaVu Sans','Liberation Sans',sans-serif" font-weight="400" font-size="17.8" fill="#f4f400" textLength="19.80" lengthAdjust="spacingAndGlyphs">170</text><text x="757.70" y="817.90" font-family="'DejaVu Sans Condensed','DejaVu Sans','Liberation Sans',sans-serif" font-weight="400" font-size="17.8" fill="#f4f400" textLength="28.20" lengthAdjust="spacingAndGlyphs">1900</text><text x="1034.80" y="814.60" font-family="'DejaVu Sans Condensed','DejaVu Sans','Liberation Sans',sans-serif" font-weight="400" font-size="17.8" fill="#f4f400" textLength="19.60" lengthAdjust="spacingAndGlyphs">170</text><text x="1062.00" y="814.60" font-family="'DejaVu Sans Condensed','DejaVu Sans','Liberation Sans',sans-serif" font-weight="400" font-size="17.8" fill="#f4f400" textLength="14.30" lengthAdjust="spacingAndGlyphs">30</text><text x="1141.20" y="817.90" font-family="'DejaVu Sans Condensed','DejaVu Sans','Liberation Sans',sans-serif" font-weight="400" font-size="17.8" fill="#f4f400" textLength="22.10" lengthAdjust="spacingAndGlyphs">600</text><text x="1228.90" y="814.60" font-family="'DejaVu Sans Condensed','DejaVu Sans','Liberation Sans',sans-serif" font-weight="400" font-size="17.8" fill="#f4f400" textLength="13.50" lengthAdjust="spacingAndGlyphs">30</text><text x="1249.20" y="814.60" font-family="'DejaVu Sans Condensed','DejaVu Sans','Liberation Sans',sans-serif" font-weight="400" font-size="17.8" fill="#f4f400" textLength="20.30" lengthAdjust="spacingAndGlyphs">170</text><text x="757.70" y="846.10" font-family="'DejaVu Sans Condensed','DejaVu Sans','Liberation Sans',sans-serif" font-weight="400" font-size="17.8" fill="#f4f400" textLength="29.40" lengthAdjust="spacingAndGlyphs">3900</text><text x="1138.70" y="590.30" font-family="'DejaVu Sans Condensed','DejaVu Sans','Liberation Sans',sans-serif" font-weight="400" font-size="17.8" fill="#f4f400" textLength="27.30" lengthAdjust="spacingAndGlyphs">1000</text><text x="1309.00" y="536.60" font-family="'DejaVu Sans Condensed','DejaVu Sans','Liberation Sans',sans-serif" font-weight="400" font-size="17.8" fill="#f4f400" textLength="23.00" lengthAdjust="spacingAndGlyphs" transform="rotate(-90 1309.00 536.60)">650</text><text x="1305.30" y="625.30" font-family="'DejaVu Sans Condensed','DejaVu Sans','Liberation Sans',sans-serif" font-weight="400" font-size="17.8" fill="#f4f400" textLength="14.90" lengthAdjust="spacingAndGlyphs" transform="rotate(-90 1305.30 625.30)">50</text><text x="1337.20" y="629.60" font-family="'DejaVu Sans Condensed','DejaVu Sans','Liberation Sans',sans-serif" font-weight="400" font-size="17.8" fill="#f4f400" textLength="26.20" lengthAdjust="spacingAndGlyphs" transform="rotate(-90 1337.20 629.60)">1350</text><text x="1308.70" y="719.70" font-family="'DejaVu Sans Condensed','DejaVu Sans','Liberation Sans',sans-serif" font-weight="400" font-size="17.8" fill="#f4f400" textLength="22.20" lengthAdjust="spacingAndGlyphs" transform="rotate(-90 1308.70 719.70)">650</text><text x="1043.60" y="643.30" font-family="'DejaVu Sans Condensed','DejaVu Sans','Liberation Sans',sans-serif" font-weight="400" font-size="17.8" fill="#f4f400" textLength="12.70" lengthAdjust="spacingAndGlyphs" transform="rotate(-90 1043.60 643.30)">30</text><text x="1043.60" y="673.70" font-family="'DejaVu Sans Condensed','DejaVu Sans','Liberation Sans',sans-serif" font-weight="400" font-size="17.8" fill="#f4f400" textLength="20.10" lengthAdjust="spacingAndGlyphs" transform="rotate(-90 1043.60 673.70)">150</text><text x="1043.60" y="750.30" font-family="'DejaVu Sans Condensed','DejaVu Sans','Liberation Sans',sans-serif" font-weight="400" font-size="17.8" fill="#f4f400" textLength="23.00" lengthAdjust="spacingAndGlyphs" transform="rotate(-90 1043.60 750.30)">420</text><text x="262.20" y="880.80" font-family="'Liberation Sans',sans-serif" font-weight="400" font-size="22.2" fill="#00f0f0" textLength="113.20" lengthAdjust="spacingAndGlyphs">BED HEAD</text><text x="261.60" y="903.10" font-family="'Liberation Sans',sans-serif" font-weight="400" font-size="22.4" fill="#00f0f0" textLength="97.00" lengthAdjust="spacingAndGlyphs">KT.TAMU</text><line x1="264.00" y1="907.60" x2="372.80" y2="907.60" stroke="#00f0f0" stroke-width="2.2" /><text x="301.60" y="921.40" font-family="'Liberation Sans',sans-serif" font-weight="400" font-size="13.4" fill="#00f0f0" textLength="70.20" lengthAdjust="spacingAndGlyphs">skala  1 : 20</text><path d="M20.500 932v50.300h50.500" fill="none" stroke="#f2f2f2" stroke-width="1"/><rect x="16.500" y="977.500" width="9" height="9" fill="none" stroke="#f2f2f2" stroke-width="1"/><path d="M22.200 915l6.300 6.800 6.300-6.800M28.500 921.800v6.200" fill="none" stroke="#f2f2f2" stroke-width="1"/><path d="M75 968l13 13M88 968l-13 13" fill="none" stroke="#f2f2f2" stroke-width="1"/></svg>
</section>
<section id="viewcube-and-navigation-bar">
<svg width="1912" height="830" viewBox="0 173 1912 830" style="left:0;top:173px"><rect x="1851" y="188.500" width="10" height="2.500" fill="#f2f2f2"/><path d="M1873.500 183.500h7v7" fill="none" stroke="#e0e0e0" stroke-width="1.200"/><rect x="1871.500" y="185.500" width="7" height="7" fill="none" stroke="#f2f2f2" stroke-width="2"/><path d="M1891.500 184l8 8M1899.500 184l-8 8" fill="none" stroke="#f2f2f2" stroke-width="2.200"/><circle cx="1829" cy="279" r="53.500" fill="none" stroke="#40464e" stroke-width="12.500"/><rect x="1803" y="253.500" width="52" height="51" fill="#a9adad"/><rect x="1813" y="263" width="32" height="32" fill="#a0a1a1"/><rect x="1805.600" y="366.300" width="47" height="17" rx="3" fill="#9195a0" stroke="#6a6e74" stroke-width="1"/><path d="M1840 373.500h6.500l-3.250 4z" fill="#9da0a5" stroke="#c4c6c9" stroke-width=".700"/><rect x="1876" y="409" width="32.200" height="212" rx="3.500" fill="#585c60" stroke="#1c2228" stroke-width="1"/><circle cx="1903" cy="414" r="3" fill="none" stroke="#6f7377" stroke-width="1"/><path d="M1901 412l4 4M1905 412l-4 4" stroke="#6f7377" stroke-width=".800"/><path d="M1881.500 439a10.500 10.500 0 0 1 10.500-10.500h10.500v10.500a10.500 10.500 0 0 1-21 0z" fill="none" stroke="#6f7377" stroke-width="1.200"/><circle cx="1892" cy="439" r="6.500" fill="none" stroke="#6f7377" stroke-width="1.200"/><path d="M1889.500 458h5l-2.500 3z" fill="#6f7377"/><path d="M1883 482c-2-3-3-5-1-6s3 1 4 3v-8c0-2 3-2 3 0v-2c0-2 3-2 3 0v2c0-2 3-2 3 0v3c0-2 3-2 3 0v8c0 4-2 7-3 9h-9c-2-3-4-6-6-9z" fill="none" stroke="#6f7377" stroke-width="1.200"/><path d="M1881 498l12 13M1895 498l-14 14M1881 498h4M1881 498v4M1895 498h-4M1895 498v4M1881 512h4M1881 512v-4" stroke="#6f7377" stroke-width="1.200" fill="none"/><circle cx="1896.500" cy="514" r="4" fill="none" stroke="#6f7377" stroke-width="1.200"/><path d="M1899.500 517l4 3.500" stroke="#6f7377" stroke-width="1.800"/><path d="M1889.500 528h5l-2.500 3z" fill="#6f7377"/><path d="M1892 537l-4.500 6h3v13h3v-13h3zM1881 548c0-3 5-5 11-5s11 2 11 5-5 5-11 5M1884 553l-3-2.500 3-2.500" fill="none" stroke="#6f7377" stroke-width="1.200"/><path d="M1889.500 566h5l-2.500 3z" fill="#6f7377"/><path d="M1881 579h5v5h-5zM1889 579h5v5h-5zM1897 579h5v5h-5zM1881 588h15v12h-15z" fill="none" stroke="#6f7377" stroke-width="1.100"/><path d="M1885.500 590.500v7l6.500-3.500z" fill="#6f7377"/><circle cx="1902.500" cy="615" r="3" fill="none" stroke="#6f7377" stroke-width="1"/><path d="M1900.500 615h4" stroke="#6f7377" stroke-width="1"/></svg>
<span class="t " style="left:1820.80px;top:211px;font-size:22px;line-height:25px;color:#b4b5b7;font-family:'Liberation Sans',sans-serif;font-weight:bold;">N</span>
<span class="t " style="left:1821.60px;top:324px;font-size:22px;line-height:25px;color:#b4b5b7;font-family:'Liberation Sans',sans-serif;font-weight:bold;">S</span>
<span class="t " style="left:1762.60px;top:267px;font-size:22px;line-height:25px;color:#b4b5b7;font-family:'Liberation Sans',sans-serif;font-weight:bold;transform:scaleX(1.0113);">W</span>
<span class="t " style="left:1877.80px;top:267px;font-size:22px;line-height:25px;color:#b4b5b7;font-family:'Liberation Sans',sans-serif;font-weight:bold;">E</span>
<span class="t " style="left:1818.00px;top:272px;font-size:13.8px;line-height:15px;color:#4e5256;font-family:'Liberation Sans',sans-serif;font-weight:bold;transform:scaleX(0.8000);">TOP</span>
<span class="t " style="left:1810.00px;top:368px;font-size:11.5px;line-height:12px;color:#585b5f;font-family:'Liberation Sans',sans-serif;transform:scaleX(0.8568);">WCS</span>
</section>
<section id="command-line">
<div class="b" style="left:463.3px;top:918px;width:788.5px;height:14.8px;background:#4c4e51;border-radius:2.500px;"></div>
<span class="t " style="left:465.30px;top:920px;font-size:12.6px;line-height:14px;color:#e4e4e4;font-family:'Liberation Mono',monospace;transform:scaleX(0.9262);">Autodesk DWG.  This file is a TrustedDWG last saved by an Autodesk application or Autodesk licensed application.</span>
<div class="b" style="left:463.3px;top:938px;width:60.5px;height:14.8px;background:#4c4e51;border-radius:2.500px;"></div>
<span class="t " style="left:465.30px;top:940px;font-size:12.6px;line-height:14px;color:#e4e4e4;font-family:'Liberation Mono',monospace;transform:scaleX(0.9261);">Command:</span>
<div class="b" style="left:463.3px;top:958px;width:60.5px;height:14.8px;background:#4c4e51;border-radius:2.500px;"></div>
<span class="t " style="left:465.30px;top:960px;font-size:12.6px;line-height:14px;color:#e4e4e4;font-family:'Liberation Mono',monospace;transform:scaleX(0.9261);">Command:</span>
<div class="b" style="left:403.3px;top:976.5px;width:1114.2px;height:25.5px;background:#cacaca;border-radius:2px;border:1px solid #8c8c8c;"></div>
<div class="b" style="left:403.3px;top:976.5px;width:53.5px;height:25.5px;background:linear-gradient(#5a5a5a,#343434);border-radius:3px 0 0 3px;border:1px solid #2a2a2a;"></div>
<div class="b" style="left:462.2px;top:982.5px;width:14.5px;height:13px;background:#b2b2b2;border:1px solid #555;border-radius:2px;"></div>
<svg width="1919" height="40" viewBox="0 970 1919 40" style="left:0;top:970px"><rect x="407" y="980.0" width="1.500" height="1.500" fill="#bdbdbd"/><rect x="410" y="980.0" width="1.500" height="1.500" fill="#bdbdbd"/><rect x="407" y="982.5" width="1.500" height="1.500" fill="#bdbdbd"/><rect x="410" y="982.5" width="1.500" height="1.500" fill="#bdbdbd"/><rect x="407" y="985.0" width="1.500" height="1.500" fill="#bdbdbd"/><rect x="410" y="985.0" width="1.500" height="1.500" fill="#bdbdbd"/><rect x="407" y="987.5" width="1.500" height="1.500" fill="#bdbdbd"/><rect x="410" y="987.5" width="1.500" height="1.500" fill="#bdbdbd"/><rect x="407" y="990.0" width="1.500" height="1.500" fill="#bdbdbd"/><rect x="410" y="990.0" width="1.500" height="1.500" fill="#bdbdbd"/><rect x="407" y="992.5" width="1.500" height="1.500" fill="#bdbdbd"/><rect x="410" y="992.5" width="1.500" height="1.500" fill="#bdbdbd"/><rect x="407" y="995.0" width="1.500" height="1.500" fill="#bdbdbd"/><rect x="410" y="995.0" width="1.500" height="1.500" fill="#bdbdbd"/><rect x="407" y="997.5" width="1.500" height="1.500" fill="#bdbdbd"/><rect x="410" y="997.5" width="1.500" height="1.500" fill="#bdbdbd"/><path d="M419.300 985.500l7 7.500M426.300 985.500l-7 7.500" fill="none" stroke="#f0f0f0" stroke-width="1.800"/><path d="M441 982.500a3.800 3.800 0 0 1 5.200 3.800l5 5.200a1.600 1.600 0 0 1-2.300 2.300l-5.200-5a3.800 3.800 0 0 1-4.600-4.800l2.400 2.300 2.200-.600.500-2.200z" fill="#f2f2f2" stroke="#2a2a2a" stroke-width=".600"/><path d="M465 986l3.500 3-3.500 3M470 992.500h4" fill="none" stroke="#3a3a3a" stroke-width="1.200"/><path d="M480.500 987h5l-2.500 3z" fill="#5a5a5a"/><path d="M1506 991.500h8l-4-4.200z" fill="#2a2a2a"/></svg>
<span class="t " style="left:493.80px;top:983px;font-size:12.6px;line-height:14px;color:#7c7c7c;font-family:'Liberation Mono',monospace;transform:scaleX(0.9167);font-style:italic;">Type a command</span>
</section>
<section id="status-bar">
<div class="b" style="left:0px;top:1003px;width:1919px;height:29px;background:#3b3b3b;border-top:1px solid #4a4a4a;"></div>
<div class="b" style="left:0px;top:1032px;width:1919px;height:2px;background:#4a1d17;border-top:1px solid #5a4a38;"></div>
<svg width="1919" height="31" viewBox="0 1003 1919 31" style="left:0;top:1003px"><defs><linearGradient id="mg" x1="0" y1="0" x2="0" y2="1"><stop offset="0" stop-color="#6a6a6a"/><stop offset="1" stop-color="#8c8c8c"/></linearGradient><linearGradient id="lg" x1="0" y1="0" x2="0" y2="1"><stop offset="0" stop-color="#4c4c4c"/><stop offset="1" stop-color="#585858"/></linearGradient></defs><path d="M8 1003.500c5 1 6 6 7.500 11 1 4 2 6.500 6 6.500h39c4 0 5-2.500 6.500-7 1.500-5 2-9.500 6-10.500z" fill="url(#mg)"/><path d="M68 1003.500c4 1 4.500 6 6 11 1 4 2 6.500 6 6.500h44c4 0 5-2.500 6.500-7 1.500-5 2-9.500 6-10.500z" fill="url(#lg)"/><path d="M136 1003.500c2.500 1.500 3 5 4 9 1 4 2 6 5 6h9c4 0 5.500-3 6.500-7 1-4 1-6.500 1.500-8z" fill="#4e4e4e"/><path d="M145.500 1012h8M149.500 1008v8" stroke="#d8d8d8" stroke-width="1.600" fill="none"/><rect x="1357.3" y="1004.500" width="48.1" height="25.500" fill="#515151" stroke="#686868" stroke-width="1"/><rect x="1407.6" y="1004.500" width="63.6" height="25.500" fill="#515151" stroke="#686868" stroke-width="1"/><rect x="1473.7" y="1004.500" width="102.0" height="25.500" fill="#515151" stroke="#686868" stroke-width="1"/><rect x="1577.2" y="1004.500" width="62.8" height="25.500" fill="#515151" stroke="#686868" stroke-width="1"/><rect x="1642.5" y="1004.500" width="106.0" height="25.500" fill="#515151" stroke="#686868" stroke-width="1"/><rect x="1750.5" y="1004.500" width="65.0" height="25.500" fill="#515151" stroke="#686868" stroke-width="1"/><rect x="1817.7" y="1004.500" width="24.4" height="25.500" fill="#515151" stroke="#686868" stroke-width="1"/><rect x="1844.4" y="1004.500" width="23.1" height="25.500" fill="#515151" stroke="#686868" stroke-width="1"/><rect x="1870.0" y="1004.500" width="48.5" height="25.500" fill="#515151" stroke="#686868" stroke-width="1"/><path d="M1790.500 1005v25" stroke="#686868" stroke-width="1"/><rect x="1498.9" y="1006" width="22.2" height="22" fill="#5b93cb"/><rect x="1577.7" y="1006" width="22.1" height="22" fill="#5b93cb"/><rect x="1602.1" y="1006" width="21.9" height="22" fill="#5b93cb"/><rect x="1644.0" y="1006" width="21.8" height="22" fill="#5b93cb"/><path d="M1412 1013.500h15M1412 1019.500h15M1416.500 1009v15M1422.500 1009v15" stroke="#e8e8e8" stroke-width="1.300" fill="none"/><rect x="1437.7" y="1010.6" width="2.200" height="2.200" fill="#e8e8e8"/><rect x="1437.7" y="1015.8" width="2.200" height="2.200" fill="#e8e8e8"/><rect x="1437.7" y="1021.0" width="2.200" height="2.200" fill="#e8e8e8"/><rect x="1442.9" y="1010.6" width="2.200" height="2.200" fill="#e8e8e8"/><rect x="1442.9" y="1015.8" width="2.200" height="2.200" fill="#e8e8e8"/><rect x="1442.9" y="1021.0" width="2.200" height="2.200" fill="#e8e8e8"/><rect x="1448.1" y="1010.6" width="2.200" height="2.200" fill="#e8e8e8"/><rect x="1448.1" y="1015.8" width="2.200" height="2.200" fill="#e8e8e8"/><rect x="1448.1" y="1021.0" width="2.200" height="2.200" fill="#e8e8e8"/><path d="M1460.1 1014.6h7l-3.500 4.200z" fill="#e8e8e8"/><path d="M1478.500 1009v15h15M1478.500 1019.500h4.500v4.500" stroke="#e8e8e8" stroke-width="1.300" fill="none"/><circle cx="1508.500" cy="1017" r="6.300" fill="none" stroke="#e8e8e8" stroke-width="1.300"/><path d="M1508.500 1017h9.500M1508.500 1017l7.500-7.500" stroke="#e8e8e8" stroke-width="1.300" fill="none"/><path d="M1525.9 1014.6h7l-3.500 4.200z" fill="#e8e8e8"/><path d="M1548.500 1009v15" stroke="#8fe0d8" stroke-width="1.300"/><path d="M1542 1010l13 13" stroke="#d0703f" stroke-width="1.300"/><circle cx="1548.500" cy="1016.500" r="1.500" fill="#515151" stroke="#f0f0f0" stroke-width=".800"/><path d="M1565.2 1014.6h7l-3.500 4.200z" fill="#e8e8e8"/><path d="M1581.500 1023.500h15M1582 1023l13-12" stroke="#e8e8e8" stroke-width="1.400" fill="none"/><rect x="1586.500" y="1015.500" width="3" height="3" fill="#e8e8e8"/><path d="M1607.500 1012.500h14v11h-14z" stroke="#e8e8e8" stroke-width="1.400" fill="none"/><rect x="1605.500" y="1009.500" width="4" height="4" fill="#5b93cb" stroke="#e8e8e8" stroke-width="1"/><path d="M1628.8 1014.6h7l-3.500 4.200z" fill="#e8e8e8"/><path d="M1653.5 1009l3 8.500 4.500 6.500-5-2.500-2.500 1.500-2.500-1.500-5 2.500 4.500-6.500z" fill="#f6f6f6"/><circle cx="1660.500" cy="1012" r="2" fill="none" stroke="#f6f6f6" stroke-width="1"/><path d="M1678.0 1009l3 8.500 4.500 6.500-5-2.500-2.500 1.500-2.500-1.500-5 2.500 4.500-6.500z" fill="#cfcfcf"/><path d="M1684.500 1009l-2 3h2l-1.500 3 3.500-3.800h-2l1.500-2.200z" fill="#e0e0e0"/><path d="M1703.3 1009l3 8.500 4.500 6.500-5-2.500-2.500 1.500-2.500-1.500-5 2.500 4.500-6.500z" fill="#cfcfcf"/><path d="M1737.2 1014.6h7l-3.500 4.200z" fill="#e8e8e8"/><circle cx="1762.500" cy="1017" r="4.800" fill="none" stroke="#e0e0e0" stroke-width="3.400"/><circle cx="1762.500" cy="1017" r="7" fill="none" stroke="#e0e0e0" stroke-width="2.200" stroke-dasharray="2.750 2.750"/><path d="M1779.4 1014.6h7l-3.500 4.200z" fill="#e8e8e8"/><path d="M1795 1017h16M1803 1009v16" stroke="#e8e8e8" stroke-width="1.600" fill="none"/><rect x="1822.500" y="1009.500" width="6" height="6" fill="none" stroke="#dcdcdc" stroke-width="1"/><circle cx="1834.500" cy="1015.500" r="3.200" fill="none" stroke="#dcdcdc" stroke-width="1"/><path d="M1825 1024.500h7l-3.500-6z" fill="none" stroke="#dcdcdc" stroke-width="1"/><path d="M1849 1010h9l3.500 3.500v9.500h-12.500z" fill="#6fb2e4"/><path d="M1858 1010v3.500h3.500z" fill="#f4f4f4"/><rect x="1849" y="1019" width="7" height="4" fill="#f3c84a"/><path d="M1852.500 1010v9M1849 1014.500h12" stroke="#ffffff" stroke-width="1"/><circle cx="1852.500" cy="1014.500" r="1.600" fill="#6fb2e4" stroke="#ffffff" stroke-width=".800"/><path d="M1856.500 1021.500l2.500 2.500 4.500-4.500" stroke="#12a012" stroke-width="1.800" fill="none"/><rect x="1874.500" y="1011.500" width="15" height="11" fill="none" stroke="#e8e8e8" stroke-width="1.200"/><path d="M1884 1014h3v3M1887 1014l-3.500 3.500M1880 1020h-3v-3M1877 1020l3.500-3.500" stroke="#e8e8e8" stroke-width="1" fill="none"/><path d="M1898 1011h16M1898 1017h16M1898 1023h16" stroke="#e8e8e8" stroke-width="1.800" fill="none"/></svg>
<span class="t " style="left:23.30px;top:1005px;font-size:12px;line-height:14px;color:#ffffff;font-family:'Liberation Sans',sans-serif;font-weight:bold;">Model</span>
<span class="t " style="left:81.00px;top:1005px;font-size:12px;line-height:14px;color:#d0d0d0;font-family:'Liberation Sans',sans-serif;transform:scaleX(0.9718);">Layout1</span>
<span class="t " style="left:1361.80px;top:1009px;font-size:12px;line-height:14px;color:#f4f4f4;font-family:'Liberation Sans',sans-serif;transform:scaleX(0.9277);">MODEL</span>
<span class="t " style="left:1720.00px;top:1009px;font-size:12px;line-height:14px;color:#f4f4f4;font-family:'Liberation Sans',sans-serif;transform:scaleX(0.7431);">1:1</span>
</section>
<section id="notification-balloon">
<svg width="1919" height="130" viewBox="0 895 1919 130" style="left:0;top:895px"><path d="M1544.500 902.700H1906A13.500 9 0 0 1 1919.500 911.700V988.300A13.500 9 0 0 1 1906 997.300H1828.200L1841.500 1016.500L1810.200 997.300H1544.500A14.500 14.500 0 0 1 1530 982.800V917.200A14.500 14.500 0 0 1 1544.500 902.700z" fill="#ffffe1" stroke="#000000" stroke-width="1.300"/><rect x="1897" y="912.500" width="15.500" height="15" fill="#ffffff" stroke="#8a8a8a" stroke-width="1"/><path d="M1901 916.500l7.500 7.500M1908.500 916.500l-7.500 7.500" stroke="#000" stroke-width="2" fill="none"/></svg>
<span class="t " style="left:1549.50px;top:913px;font-size:12px;line-height:14px;color:#000;font-family:'Liberation Sans',sans-serif;font-weight:bold;transform:scaleX(0.9788);">3D Display Performance Notification</span>
<span class="t " style="left:1544.80px;top:935px;font-size:12px;line-height:14px;color:#111;font-family:'Liberation Sans',sans-serif;transform:scaleX(0.9818);">Enhanced 3D performance is not available for the current visual style.</span>
<span class="t " style="left:1545.00px;top:950px;font-size:12px;line-height:14px;color:#111;font-family:'Liberation Sans',sans-serif;transform:scaleX(0.9660);">The required settings are listed here:</span>
<span class="t " style="left:1545.00px;top:971px;font-size:12px;line-height:14px;color:#0000e6;font-family:'Liberation Sans',sans-serif;transform:scaleX(0.9124);text-decoration:underline;">VISUALSTYLES Command</span>
</section>
</div></body></html>
